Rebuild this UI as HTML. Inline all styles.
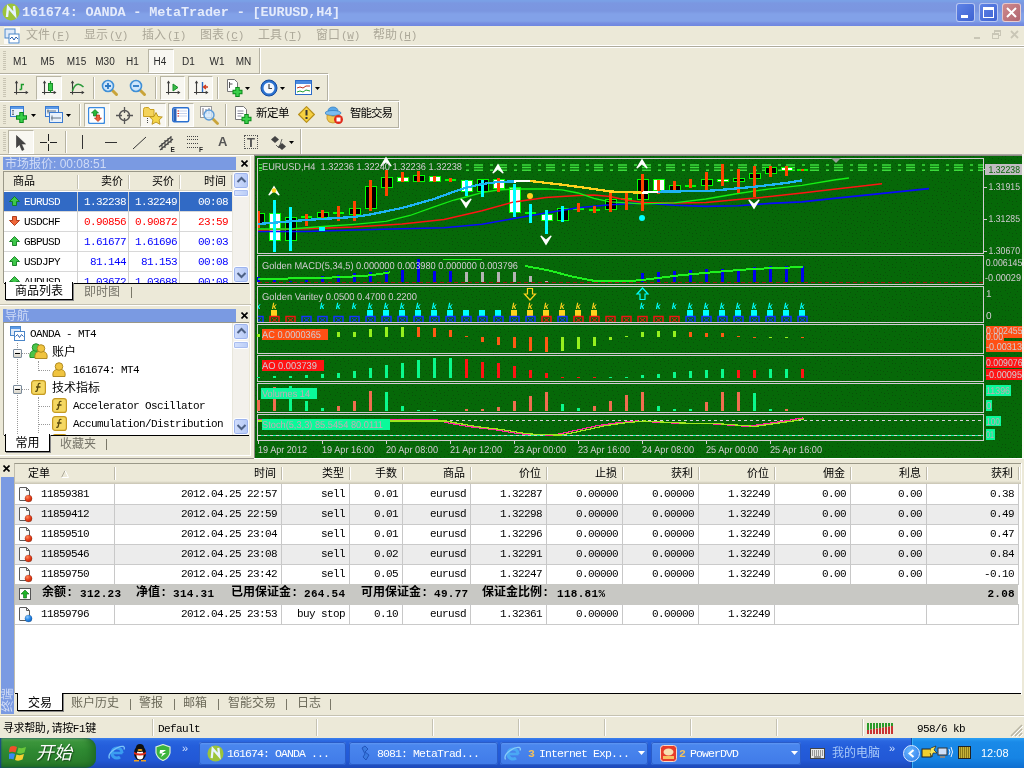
<!DOCTYPE html>
<html lang="zh-CN">
<head>
<meta charset="utf-8">
<title>161674: OANDA - MetaTrader - [EURUSD,H4]</title>
<style>
*{box-sizing:border-box;margin:0;padding:0}
html,body{width:1024px;height:768px;overflow:hidden;background:#ece9d8}
body{position:relative;font-family:"Liberation Mono","Noto Sans CJK SC",monospace;font-size:11px;color:#000}
.abs,.abs *{position:absolute}
.a{position:absolute}
.mono{font-family:"Liberation Mono","Noto Sans CJK SC",monospace;font-size:11px;letter-spacing:-0.6px;white-space:nowrap}
.cjk{font-family:"Liberation Sans","Noto Sans CJK SC",sans-serif;font-size:12px;white-space:nowrap}
.tah{font-family:"Liberation Sans","Noto Sans CJK SC",sans-serif;font-size:11px;white-space:nowrap}
/* title bar */
#title{left:0;top:0;width:1024px;height:26px;background:linear-gradient(#7aa0e6 0,#7aa0e6 1px,#7b97e1 3px,#7b96e0 11px,#82a1e8 14px,#82a1e8 21px,#7890e2 23px,#6e86e0 26px)}
#title .txt{left:22px;top:4px;font-family:"Liberation Mono","Noto Sans CJK SC",monospace;font-weight:bold;font-size:13.5px;letter-spacing:-0.15px;color:#e4ebfb;white-space:nowrap;line-height:18px}
.tb{top:3px;width:19px;height:19px;border:1px solid rgba(255,255,255,.6);border-radius:3px}
/* menu */
#menu{left:0;top:26px;width:1024px;height:19px;background:#ece9d8}
#menu i{position:static;font-style:normal;font-family:"Liberation Mono",monospace;font-size:11px;letter-spacing:-.3px;margin-left:1px}
#menu span{top:2px;color:#aca899;font-size:12px;line-height:15px;font-family:"Liberation Sans","Noto Sans CJK SC",sans-serif;white-space:nowrap}
.hl{height:1px;background:#fff}
.sh{height:1px;background:#aca899}
</style>
</head>
<body>
<div id="root" style="position:absolute;left:0;top:0;width:1024px;height:768px;will-change:transform;overflow:hidden">
<!-- TITLE BAR -->
<div id="title" class="a">
  <svg class="a" style="left:2px;top:3px" width="18" height="18" viewBox="0 0 18 18"><circle cx="9" cy="9" r="8.5" fill="#9cc43a"/><path d="M5 14 L6 4 L13 12 L12 3" fill="none" stroke="#e6f2ff" stroke-width="2.4"/></svg>
  <div class="a txt">161674: OANDA - MetaTrader - [EURUSD,H4]</div>
  <div class="a tb" style="left:956px;background:linear-gradient(135deg,#5f83e6,#3d62d2)"><div class="a" style="left:4px;top:11px;width:7px;height:3px;background:#fff"></div></div>
  <div class="a tb" style="left:979px;background:linear-gradient(135deg,#5f83e6,#3d62d2)"><div class="a" style="left:3px;top:3px;width:11px;height:11px;border:1px solid #fff;border-top-width:3px"></div></div>
  <div class="a tb" style="left:1002px;background:linear-gradient(135deg,#cf8a8e,#b0656f)"><svg class="a" style="left:3px;top:3px" width="11" height="11" viewBox="0 0 11 11"><path d="M1 1L10 10M10 1L1 10" stroke="#fff" stroke-width="2"/></svg></div>
</div>
<!-- MENU BAR -->
<div id="menu" class="a">
  <div class="a" style="left:4px;top:1px;width:16px;height:17px;background:#fbfaf6"></div><svg class="a" style="left:4px;top:2px" width="16" height="16" viewBox="0 0 16 16"><rect x="1" y="1" width="10" height="9" fill="#dfeaf8" stroke="#4a86c8"/><rect x="5" y="6" width="10" height="9" fill="#fff" stroke="#4a86c8"/><path d="M6 11l2-2 2 3 2-3 2 2" stroke="#2a62b0" fill="none"/></svg>
  <span class="a" style="left:26px">文件<i>(<u>F</u>)</i></span>
  <span class="a" style="left:84px">显示<i>(<u>V</u>)</i></span>
  <span class="a" style="left:142px">插入<i>(<u>I</u>)</i></span>
  <span class="a" style="left:200px">图表<i>(<u>C</u>)</i></span>
  <span class="a" style="left:258px">工具<i>(<u>T</u>)</i></span>
  <span class="a" style="left:316px">窗口<i>(<u>W</u>)</i></span>
  <span class="a" style="left:373px">帮助<i>(<u>H</u>)</i></span>
  <div class="a" style="left:974px;top:11px;width:6px;height:2px;background:#c9c6b6"></div>
  <div class="a" style="left:994px;top:4px;width:7px;height:6px;border:1px solid #c9c6b6;border-top-width:2px"></div>
  <div class="a" style="left:992px;top:7px;width:7px;height:6px;border:1px solid #c9c6b6;border-top-width:2px;background:#ece9d8"></div>
  <svg class="a" style="left:1010px;top:4px" width="9" height="9" viewBox="0 0 9 9"><path d="M1 1L8 8M8 1L1 8" stroke="#c9c6b6" stroke-width="1.8"/></svg>
</div>
<div class="a hl" style="left:0;top:45px;width:1024px"></div>
<div class="a sh" style="left:0;top:46px;width:1024px;background:#aeab9c"></div>
<div class="a hl" style="left:0;top:47px;width:1024px"></div>
<!-- toolbars -->
<div class="a" style="left:0;top:73px;width:328px;height:1px;background:#b4b1a2"></div><div class="a" style="left:0;top:74px;width:329px;height:1px;background:#fff"></div><div class="a" style="left:259px;top:48px;width:1px;height:25px;background:#b4b1a2"></div><div class="a" style="left:260px;top:48px;width:1px;height:26px;background:#fff"></div>
<div class="a" style="left:3px;top:51px;width:3px;height:1px;background:#c8c4b3"></div><div class="a" style="left:3px;top:53px;width:3px;height:1px;background:#c8c4b3"></div><div class="a" style="left:3px;top:55px;width:3px;height:1px;background:#c8c4b3"></div><div class="a" style="left:3px;top:57px;width:3px;height:1px;background:#c8c4b3"></div><div class="a" style="left:3px;top:59px;width:3px;height:1px;background:#c8c4b3"></div><div class="a" style="left:3px;top:61px;width:3px;height:1px;background:#c8c4b3"></div><div class="a" style="left:3px;top:63px;width:3px;height:1px;background:#c8c4b3"></div><div class="a" style="left:3px;top:65px;width:3px;height:1px;background:#c8c4b3"></div><div class="a" style="left:3px;top:67px;width:3px;height:1px;background:#c8c4b3"></div><div class="a" style="left:3px;top:69px;width:3px;height:1px;background:#c8c4b3"></div>
<div class="a" style="left:148px;top:49px;width:26px;height:24px;background:#f8f7f1;border:1px solid;border-color:#b8b5a4 #fff #fff #b8b5a4"></div>
<div class="a tah" style="left:6px;top:55px;width:28px;text-align:center;color:#2a2a2a;line-height:14px;font-size:10px">M1</div>
<div class="a tah" style="left:33.5px;top:55px;width:28px;text-align:center;color:#2a2a2a;line-height:14px;font-size:10px">M5</div>
<div class="a tah" style="left:62.5px;top:55px;width:28px;text-align:center;color:#2a2a2a;line-height:14px;font-size:10px">M15</div>
<div class="a tah" style="left:91px;top:55px;width:28px;text-align:center;color:#2a2a2a;line-height:14px;font-size:10px">M30</div>
<div class="a tah" style="left:118.5px;top:55px;width:28px;text-align:center;color:#2a2a2a;line-height:14px;font-size:10px">H1</div>
<div class="a tah" style="left:146px;top:55px;width:28px;text-align:center;color:#2a2a2a;line-height:14px;font-size:10px">H4</div>
<div class="a tah" style="left:174.5px;top:55px;width:28px;text-align:center;color:#2a2a2a;line-height:14px;font-size:10px">D1</div>
<div class="a tah" style="left:203px;top:55px;width:28px;text-align:center;color:#2a2a2a;line-height:14px;font-size:10px">W1</div>
<div class="a tah" style="left:229.5px;top:55px;width:28px;text-align:center;color:#2a2a2a;line-height:14px;font-size:10px">MN</div>
<div class="a" style="left:0;top:100px;width:399px;height:1px;background:#b4b1a2"></div><div class="a" style="left:0;top:101px;width:400px;height:1px;background:#fff"></div><div class="a" style="left:327px;top:75px;width:1px;height:25px;background:#b4b1a2"></div><div class="a" style="left:328px;top:75px;width:1px;height:26px;background:#fff"></div>
<div class="a" style="left:3px;top:78px;width:3px;height:1px;background:#c8c4b3"></div><div class="a" style="left:3px;top:80px;width:3px;height:1px;background:#c8c4b3"></div><div class="a" style="left:3px;top:82px;width:3px;height:1px;background:#c8c4b3"></div><div class="a" style="left:3px;top:84px;width:3px;height:1px;background:#c8c4b3"></div><div class="a" style="left:3px;top:86px;width:3px;height:1px;background:#c8c4b3"></div><div class="a" style="left:3px;top:88px;width:3px;height:1px;background:#c8c4b3"></div><div class="a" style="left:3px;top:90px;width:3px;height:1px;background:#c8c4b3"></div><div class="a" style="left:3px;top:92px;width:3px;height:1px;background:#c8c4b3"></div><div class="a" style="left:3px;top:94px;width:3px;height:1px;background:#c8c4b3"></div><div class="a" style="left:3px;top:96px;width:3px;height:1px;background:#c8c4b3"></div>
<svg class="a" style="left:13px;top:80px" width="17" height="17" viewBox="0 0 17 17"><path d="M3.500 1.500v13M1 12.500h13.500" stroke="#3c3c3c" stroke-width="1.100" fill="none"/><path d="M3.500 0.500l-1.700 2.800h3.400zM15.500 12.500l-2.800-1.700v3.400z" fill="#3c3c3c"/><path d="M8.5 9.5v-5h2.5M8.5 9.5h-2" stroke="#1a9a2a" stroke-width="1.5" fill="none"/></svg>
<div class="a" style="left:36px;top:76px;width:26px;height:24px;background:#f8f7f1;border:1px solid;border-color:#b8b5a4 #fff #fff #b8b5a4"></div>
<svg class="a" style="left:41px;top:80px" width="17" height="17" viewBox="0 0 17 17"><path d="M3.500 1.500v13M1 12.500h13.500" stroke="#3c3c3c" stroke-width="1.100" fill="none"/><path d="M3.500 0.500l-1.700 2.800h3.400zM15.500 12.500l-2.800-1.700v3.400z" fill="#3c3c3c"/><path d="M9.5 1v12" stroke="#1a8a2a" stroke-width="1.2"/><rect x="7.5" y="3.5" width="4" height="7" fill="#35c845" stroke="#1a8a2a"/></svg>
<svg class="a" style="left:69px;top:80px" width="17" height="17" viewBox="0 0 17 17"><path d="M3.500 1.500v13M1 12.500h13.500" stroke="#3c3c3c" stroke-width="1.100" fill="none"/><path d="M3.500 0.500l-1.700 2.800h3.400zM15.500 12.500l-2.800-1.700v3.400z" fill="#3c3c3c"/><path d="M3.5 11c2-7 6-9 11-4" stroke="#2a9a3a" stroke-width="1.5" fill="none"/></svg>
<div class="a" style="left:93px;top:77px;width:1px;height:22px;background:#b5b2a1"></div><div class="a" style="left:94px;top:77px;width:1px;height:22px;background:#fff"></div>
<svg class="a" style="left:101px;top:79px" width="18" height="18" viewBox="0 0 18 18"><path d="M10 10l5.5 5.5" stroke="#c9a43a" stroke-width="3" stroke-linecap="round"/><circle cx="7" cy="7" r="5.5" fill="#cfe6fb" stroke="#3f8fd6" stroke-width="1.6"/><path d="M4 7h6M7 4v6" stroke="#2a78c4" stroke-width="1.8"/></svg>
<svg class="a" style="left:129px;top:79px" width="18" height="18" viewBox="0 0 18 18"><path d="M10 10l5.5 5.5" stroke="#c9a43a" stroke-width="3" stroke-linecap="round"/><circle cx="7" cy="7" r="5.5" fill="#cfe6fb" stroke="#3f8fd6" stroke-width="1.6"/><path d="M4 7h6" stroke="#2a78c4" stroke-width="1.8"/></svg>
<div class="a" style="left:155px;top:77px;width:1px;height:22px;background:#b5b2a1"></div><div class="a" style="left:156px;top:77px;width:1px;height:22px;background:#fff"></div>
<div class="a" style="left:160px;top:76px;width:25px;height:24px;background:#f8f7f1;border:1px solid;border-color:#b8b5a4 #fff #fff #b8b5a4"></div>
<svg class="a" style="left:165px;top:80px" width="17" height="17" viewBox="0 0 17 17"><path d="M3.500 1.500v13M1 12.500h13.500" stroke="#3c3c3c" stroke-width="1.100" fill="none"/><path d="M3.500 0.500l-1.700 2.800h3.400zM15.500 12.500l-2.800-1.700v3.400z" fill="#3c3c3c"/><path d="M8 4l5 3.5-5 3.5z" fill="#38c048" stroke="#1a8a2a"/></svg>
<div class="a" style="left:188px;top:76px;width:25px;height:24px;background:#f8f7f1;border:1px solid;border-color:#b8b5a4 #fff #fff #b8b5a4"></div>
<svg class="a" style="left:193px;top:80px" width="17" height="17" viewBox="0 0 17 17"><path d="M3.500 1.500v13M1 12.500h13.500" stroke="#3c3c3c" stroke-width="1.100" fill="none"/><path d="M3.500 0.500l-1.700 2.800h3.400zM15.500 12.500l-2.800-1.700v3.400z" fill="#3c3c3c"/><path d="M9.500 2v10" stroke="#2a6ac0" stroke-width="1.4"/><path d="M15 7h-4M13 5l-2.500 2 2.500 2" stroke="#d03a1a" stroke-width="1.3" fill="none"/></svg>
<div class="a" style="left:217px;top:77px;width:1px;height:22px;background:#b5b2a1"></div><div class="a" style="left:218px;top:77px;width:1px;height:22px;background:#fff"></div>
<svg class="a" style="left:226px;top:79px" width="18" height="19" viewBox="0 0 18 19"><path d="M1.500 0.500h7l3 3v9h-10z" fill="#fff" stroke="#777"/><path d="M3.500 3v6M3.500 5h3" stroke="#555" fill="none"/><path d="M11.500 8v10M6.500 13h10" stroke="#0a8a1a" stroke-width="4.500"/><path d="M11.500 9v8M7.500 13h8" stroke="#3ad04a" stroke-width="2.500"/></svg>
<svg class="a" style="left:245px;top:87px" width="5" height="3" viewBox="0 0 5 3"><path d="M0 0h5L2.5 3z" fill="#000"/></svg>
<svg class="a" style="left:260px;top:79px" width="18" height="18" viewBox="0 0 18 18"><circle cx="9" cy="9" r="8" fill="#2a72d0" stroke="#174a9c"/><circle cx="9" cy="9" r="5.500" fill="#f4f8ff"/><path d="M9 5v4.500h3" stroke="#444" stroke-width="1.200" fill="none"/></svg>
<svg class="a" style="left:280px;top:87px" width="5" height="3" viewBox="0 0 5 3"><path d="M0 0h5L2.5 3z" fill="#000"/></svg>
<svg class="a" style="left:295px;top:80px" width="18" height="16" viewBox="0 0 18 16"><rect x="0.500" y="0.500" width="16" height="14" fill="#fff" stroke="#2a6ac8"/><rect x="1" y="1" width="15" height="3" fill="#4a8ae0"/><path d="M2 8l3-1 3 1 3-2 4 0" stroke="#c03020" fill="none"/><path d="M2 12l3-1 3 1 3-2 4 1" stroke="#20a030" fill="none"/></svg>
<svg class="a" style="left:315px;top:87px" width="5" height="3" viewBox="0 0 5 3"><path d="M0 0h5L2.5 3z" fill="#000"/></svg>
<div class="a" style="left:0;top:127px;width:399px;height:1px;background:#b4b1a2"></div><div class="a" style="left:0;top:128px;width:400px;height:1px;background:#fff"></div><div class="a" style="left:398px;top:102px;width:1px;height:25px;background:#b4b1a2"></div><div class="a" style="left:399px;top:102px;width:1px;height:26px;background:#fff"></div>
<div class="a" style="left:3px;top:105px;width:3px;height:1px;background:#c8c4b3"></div><div class="a" style="left:3px;top:107px;width:3px;height:1px;background:#c8c4b3"></div><div class="a" style="left:3px;top:109px;width:3px;height:1px;background:#c8c4b3"></div><div class="a" style="left:3px;top:111px;width:3px;height:1px;background:#c8c4b3"></div><div class="a" style="left:3px;top:113px;width:3px;height:1px;background:#c8c4b3"></div><div class="a" style="left:3px;top:115px;width:3px;height:1px;background:#c8c4b3"></div><div class="a" style="left:3px;top:117px;width:3px;height:1px;background:#c8c4b3"></div><div class="a" style="left:3px;top:119px;width:3px;height:1px;background:#c8c4b3"></div><div class="a" style="left:3px;top:121px;width:3px;height:1px;background:#c8c4b3"></div><div class="a" style="left:3px;top:123px;width:3px;height:1px;background:#c8c4b3"></div>
<svg class="a" style="left:10px;top:106px" width="19" height="18" viewBox="0 0 19 18"><rect x="0.500" y="0.500" width="13" height="10" fill="#e8f1fb" stroke="#3a7ad0"/><rect x="1" y="1" width="12" height="2" fill="#5a9ae8"/><path d="M3 4v5M2 5l1-1 1 1M2 8l1 1 1-1" stroke="#567" fill="none" stroke-width=".8"/><path d="M11.500 6v11M6 11.500h11" stroke="#0a8a1a" stroke-width="4.500"/><path d="M11.500 7v9M7 11.500h9" stroke="#3ad04a" stroke-width="2.500"/></svg>
<svg class="a" style="left:31px;top:114px" width="5" height="3" viewBox="0 0 5 3"><path d="M0 0h5L2.5 3z" fill="#000"/></svg>
<svg class="a" style="left:45px;top:106px" width="19" height="18" viewBox="0 0 19 18"><rect x="0.500" y="0.500" width="13" height="10" fill="#e8f1fb" stroke="#3a7ad0"/><rect x="1" y="1" width="12" height="2" fill="#5a9ae8"/><rect x="4.500" y="6.500" width="13" height="10" fill="#e8f1fb" stroke="#3a7ad0"/><path d="M2 5h9M6 12h10M3 3.500v4M7 9.500v5" stroke="#567" stroke-width=".9"/></svg>
<svg class="a" style="left:66px;top:114px" width="5" height="3" viewBox="0 0 5 3"><path d="M0 0h5L2.5 3z" fill="#000"/></svg>
<div class="a" style="left:79px;top:104px;width:1px;height:22px;background:#b5b2a1"></div><div class="a" style="left:80px;top:104px;width:1px;height:22px;background:#fff"></div>
<div class="a" style="left:84px;top:103px;width:26px;height:24px;background:#f8f7f1;border:1px solid;border-color:#b8b5a4 #fff #fff #b8b5a4"></div>
<svg class="a" style="left:88px;top:107px" width="17" height="17" viewBox="0 0 17 17"><rect x="0.500" y="0.500" width="16" height="16" rx="1.500" fill="#fff" stroke="#3a8ae0" stroke-width="1.400"/><path d="M5.500 9V6h-2l3.500-3.500L10.500 6h-2v3z" fill="#2ab83a" stroke="#0a7a1a" stroke-width=".7"/><path d="M8.500 8v3h-2l3.500 3.500L13.500 11h-2V8z" fill="#f0603a" stroke="#b02a10" stroke-width=".7"/></svg>
<svg class="a" style="left:116px;top:107px" width="17" height="17" viewBox="0 0 17 17"><circle cx="8.500" cy="8.500" r="5" fill="none" stroke="#555" stroke-width="1.500"/><path d="M8.500 0v6M8.500 11v6M0 8.500h6M11 8.500h6" stroke="#555" stroke-width="1.300"/></svg>
<div class="a" style="left:140px;top:103px;width:26px;height:24px;background:#f8f7f1;border:1px solid;border-color:#b8b5a4 #fff #fff #b8b5a4"></div>
<svg class="a" style="left:143px;top:106px" width="20" height="19" viewBox="0 0 20 19"><path d="M0.500 3.500q0-2 2-2h3l1.500 2h4v7h-10.500z" fill="#f4d35a" stroke="#c9a020"/><path d="M13 6.500l2 4 4.300 .5-3.200 3 .9 4.300-4-2.200-4 2.200 .9-4.300-3.200-3 4.300-.5z" fill="#f6d648" stroke="#b8901a" stroke-width=".9"/><path d="M4.500 12v5" stroke="#444" stroke-dasharray="1 1"/></svg>
<div class="a" style="left:168px;top:103px;width:26px;height:24px;background:#f8f7f1;border:1px solid;border-color:#b8b5a4 #fff #fff #b8b5a4"></div>
<svg class="a" style="left:172px;top:107px" width="18" height="16" viewBox="0 0 18 16"><rect x="0.700" y="0.700" width="16" height="14" rx="1.500" fill="#fff" stroke="#2a70d0" stroke-width="1.400"/><rect x="1.500" y="1.500" width="3" height="12.500" fill="#2a60b8"/><path d="M6 4h9M6 6.500h9M6 9h9" stroke="#b8c8e8" stroke-width=".8"/><path d="M5.500 4h1.500M5.500 6.500h1.500M5.500 9h1.500" stroke="#e02a1a" stroke-width="1.200"/></svg>
<svg class="a" style="left:200px;top:106px" width="19" height="19" viewBox="0 0 19 19"><rect x="0.500" y="0.500" width="11" height="11" fill="#fff" stroke="#999"/><path d="M3 2v7M6 3v5M9 2v6" stroke="#778"/><path d="M12 12l5.500 5.500" stroke="#c9a43a" stroke-width="2.800" stroke-linecap="round"/><circle cx="9" cy="9" r="5" fill="#cfe6fb" fill-opacity=".8" stroke="#5a9ad8" stroke-width="1.400"/></svg>
<div class="a" style="left:225px;top:104px;width:1px;height:22px;background:#b5b2a1"></div><div class="a" style="left:226px;top:104px;width:1px;height:22px;background:#fff"></div>
<svg class="a" style="left:235px;top:106px" width="18" height="19" viewBox="0 0 18 19"><path d="M0.500 0.500h8l3 3v10h-11z" fill="#fff" stroke="#777"/><path d="M2.500 5h6M2.500 7.500h6M2.500 10h4" stroke="#889"/><path d="M11.500 8v10M6.500 13h10" stroke="#0a8a1a" stroke-width="4.500"/><path d="M11.500 9v8M7.500 13h8" stroke="#3ad04a" stroke-width="2.500"/></svg>
<div class="a cjk" style="left:256px;top:106px;line-height:15px;font-size:11.5px;letter-spacing:-.5px">新定单</div>
<svg class="a" style="left:298px;top:106px" width="17" height="17" viewBox="0 0 17 17"><path d="M8.500 0.700l7.800 7.800-7.800 7.800-7.800-7.800z" fill="#f6d040" stroke="#b8901a" stroke-width="1.200"/><path d="M8.500 4v5.500M8.500 11v2" stroke="#333" stroke-width="2"/></svg>
<svg class="a" style="left:325px;top:106px" width="19" height="19" viewBox="0 0 19 19"><ellipse cx="8" cy="5" rx="5" ry="4" fill="#5aa8e8" stroke="#2a78c0" stroke-width=".7"/><ellipse cx="8" cy="7" rx="8" ry="2.500" fill="#7abcf0" stroke="#2a78c0" stroke-width=".7"/><path d="M2 9q6 3 12 0v4q-1 4-6 4-5 0-6-4z" fill="#f0c850" stroke="#b88a20" stroke-width=".7"/><circle cx="13.500" cy="13.500" r="4.500" fill="#e02a1a"/><rect x="11.500" y="11.500" width="4" height="4" fill="#fff"/></svg>
<div class="a cjk" style="left:350px;top:106px;line-height:15px;font-size:11.5px;letter-spacing:-1px">智能交易</div>
<div class="a" style="left:0;top:154px;width:301px;height:1px;background:#b4b1a2"></div><div class="a" style="left:0;top:155px;width:302px;height:1px;background:#fff"></div><div class="a" style="left:300px;top:129px;width:1px;height:25px;background:#b4b1a2"></div><div class="a" style="left:301px;top:129px;width:1px;height:26px;background:#fff"></div>
<div class="a" style="left:3px;top:132px;width:3px;height:1px;background:#c8c4b3"></div><div class="a" style="left:3px;top:134px;width:3px;height:1px;background:#c8c4b3"></div><div class="a" style="left:3px;top:136px;width:3px;height:1px;background:#c8c4b3"></div><div class="a" style="left:3px;top:138px;width:3px;height:1px;background:#c8c4b3"></div><div class="a" style="left:3px;top:140px;width:3px;height:1px;background:#c8c4b3"></div><div class="a" style="left:3px;top:142px;width:3px;height:1px;background:#c8c4b3"></div><div class="a" style="left:3px;top:144px;width:3px;height:1px;background:#c8c4b3"></div><div class="a" style="left:3px;top:146px;width:3px;height:1px;background:#c8c4b3"></div><div class="a" style="left:3px;top:148px;width:3px;height:1px;background:#c8c4b3"></div><div class="a" style="left:3px;top:150px;width:3px;height:1px;background:#c8c4b3"></div>
<div class="a" style="left:8px;top:130px;width:26px;height:24px;background:#f8f7f1;border:1px solid;border-color:#b8b5a4 #fff #fff #b8b5a4"></div>
<svg class="a" style="left:16px;top:135px" width="11" height="16" viewBox="0 0 11 16"><path d="M0.500 0.500v12l3-3 2.500 6 2-1-2.500-5.500h4z" fill="#444" stroke="#333" stroke-width=".6"/></svg>
<svg class="a" style="left:40px;top:134px" width="17" height="17" viewBox="0 0 17 17"><path d="M8.500 0v7M8.500 10v7M0 8.500h7M10 8.500h7" stroke="#222" stroke-width="1"/></svg>
<div class="a" style="left:65px;top:131px;width:1px;height:22px;background:#b5b2a1"></div><div class="a" style="left:66px;top:131px;width:1px;height:22px;background:#fff"></div>
<div class="a" style="left:82px;top:135px;width:1px;height:14px;background:#333"></div>
<div class="a" style="left:105px;top:142px;width:12px;height:1px;background:#333"></div>
<svg class="a" style="left:132px;top:136px" width="15" height="14" viewBox="0 0 15 14"><path d="M1 13L14 1" stroke="#333" stroke-width="1"/></svg>
<svg class="a" style="left:158px;top:134px" width="18" height="18" viewBox="0 0 18 18"><path d="M1 13L13 3M2 16L15 5M4 9v7M7 6v8M10 4v7M13 2v7" stroke="#444" stroke-width="1.100"/><text x="12.500" y="18" font-size="6.500" font-weight="bold" font-family="Liberation Sans,sans-serif" fill="#222">E</text></svg>
<svg class="a" style="left:187px;top:135px" width="18" height="18" viewBox="0 0 18 18"><path d="M0 1.500h12M0 4.500h12M0 8.500h12M0 12.500h12" stroke="#444" stroke-dasharray="1 1"/><text x="12" y="17" font-size="6.500" font-weight="bold" font-family="Liberation Sans,sans-serif" fill="#222">F</text></svg>
<div class="a" style="left:218px;top:134px;font-family:'Liberation Sans',sans-serif;font-weight:bold;font-size:13px;color:#555;line-height:16px">A</div>
<div class="a" style="left:244px;top:135px;width:14px;height:14px;border:1px dotted #555;font-family:'Liberation Sans',sans-serif;font-weight:bold;font-size:13px;color:#555;line-height:13px;text-align:center">T</div>
<svg class="a" style="left:271px;top:136px" width="16" height="14" viewBox="0 0 16 14"><path d="M4 0l4 3.500-4 3.500-4-3.500z" fill="#444"/><path d="M11 7l4 3.500-4 3.500-4-3.500z" fill="#444"/><path d="M5 9l3 3 3-9" stroke="#444" fill="none" stroke-width=".8"/></svg>
<svg class="a" style="left:289px;top:141px" width="5" height="3" viewBox="0 0 5 3"><path d="M0 0h5L2.5 3z" fill="#000"/></svg>
<!-- left -->
<div class="a" style="left:0;top:155px;width:251px;height:1px;background:#fff"></div>
<div class="a" style="left:250px;top:156px;width:1px;height:300px;background:#fff"></div>
<div class="a" style="left:0;top:304px;width:251px;height:1px;background:#c5c2b2"></div>
<div class="a" style="left:0;top:305px;width:251px;height:1px;background:#fff"></div>
<div class="a" style="left:3px;top:157px;width:233px;height:13px;background:#7a9ae2"></div><div class="a cjk" style="left:5px;top:156px;line-height:16px;font-size:12px;color:#cfdbf6">市场报价: 00:08:51</div><svg class="a" style="left:241px;top:160px" width="7" height="7" viewBox="0 0 7 7"><path d="M0.500 0.500l6 6M6.500 0.500l-6 6" stroke="#000" stroke-width="1.600"/></svg>
<div class="a" style="left:3px;top:171px;width:246px;height:112px;background:#fff;border:1px solid #9a9888;border-bottom:none"></div>
<div class="a" style="left:4px;top:172px;width:228px;height:19px;background:#ece9d8;border-bottom:1px solid #d6d2c2"></div>
<div class="a" style="left:77px;top:175px;width:1px;height:14px;background:#c5c2b2"></div><div class="a" style="left:78px;top:175px;width:1px;height:14px;background:#fff"></div>
<div class="a" style="left:128px;top:175px;width:1px;height:14px;background:#c5c2b2"></div><div class="a" style="left:129px;top:175px;width:1px;height:14px;background:#fff"></div>
<div class="a" style="left:179px;top:175px;width:1px;height:14px;background:#c5c2b2"></div><div class="a" style="left:180px;top:175px;width:1px;height:14px;background:#fff"></div>
<div class="a" style="left:231px;top:175px;width:1px;height:14px;background:#c5c2b2"></div><div class="a" style="left:232px;top:175px;width:1px;height:14px;background:#fff"></div>
<div class="a cjk" style="left:13px;top:173px;line-height:16px;font-size:11px">商品</div>
<div class="a cjk" style="left:83px;width:40px;text-align:right;top:173px;line-height:16px;font-size:11px">卖价</div>
<div class="a cjk" style="left:134px;width:40px;text-align:right;top:173px;line-height:16px;font-size:11px">买价</div>
<div class="a cjk" style="left:186px;width:40px;text-align:right;top:173px;line-height:16px;font-size:11px">时间</div>
<div class="a" style="left:4px;top:192px;width:228px;height:91px;overflow:hidden">
<div class="a" style="left:0;top:0px;width:228px;height:20px;background:#316ac5;border-bottom:1px solid #d8d8d8"></div>
<svg class="a" style="left:5px;top:4px" width="11" height="10" viewBox="0 0 11 10"><path d="M5.500 0.500L10.500 5.500H7.500V9.500H3.500V5.500H0.500z" fill="#3ec84a" stroke="#0e7a1e" stroke-width=".9"/></svg>
<div class="a mono" style="left:20px;top:3px;line-height:14px;color:#fff">EURUSD</div>
<div class="a mono" style="left:62px;width:60px;text-align:right;top:3px;line-height:14px;color:#fff">1.32238</div>
<div class="a mono" style="left:113px;width:60px;text-align:right;top:3px;line-height:14px;color:#fff">1.32249</div>
<div class="a mono" style="left:164px;width:60px;text-align:right;top:3px;line-height:14px;color:#fff">00:08</div>
<div class="a" style="left:0;top:20px;width:228px;height:20px;background:#fff;border-bottom:1px solid #d8d8d8"></div>
<svg class="a" style="left:5px;top:24px" width="11" height="10" viewBox="0 0 11 10"><path d="M5.500 9.500L10.500 4.500H7.500V0.500H3.500V4.500H0.500z" fill="#f0683a" stroke="#a8300e" stroke-width=".9"/></svg>
<div class="a mono" style="left:20px;top:23px;line-height:14px;color:#000">USDCHF</div>
<div class="a mono" style="left:62px;width:60px;text-align:right;top:23px;line-height:14px;color:#f00">0.90856</div>
<div class="a mono" style="left:113px;width:60px;text-align:right;top:23px;line-height:14px;color:#f00">0.90872</div>
<div class="a mono" style="left:164px;width:60px;text-align:right;top:23px;line-height:14px;color:#f00">23:59</div>
<div class="a" style="left:0;top:40px;width:228px;height:20px;background:#fff;border-bottom:1px solid #d8d8d8"></div>
<svg class="a" style="left:5px;top:44px" width="11" height="10" viewBox="0 0 11 10"><path d="M5.500 0.500L10.500 5.500H7.500V9.500H3.500V5.500H0.500z" fill="#3ec84a" stroke="#0e7a1e" stroke-width=".9"/></svg>
<div class="a mono" style="left:20px;top:43px;line-height:14px;color:#000">GBPUSD</div>
<div class="a mono" style="left:62px;width:60px;text-align:right;top:43px;line-height:14px;color:#00f">1.61677</div>
<div class="a mono" style="left:113px;width:60px;text-align:right;top:43px;line-height:14px;color:#00f">1.61696</div>
<div class="a mono" style="left:164px;width:60px;text-align:right;top:43px;line-height:14px;color:#00f">00:03</div>
<div class="a" style="left:0;top:60px;width:228px;height:20px;background:#fff;border-bottom:1px solid #d8d8d8"></div>
<svg class="a" style="left:5px;top:64px" width="11" height="10" viewBox="0 0 11 10"><path d="M5.500 0.500L10.500 5.500H7.500V9.500H3.500V5.500H0.500z" fill="#3ec84a" stroke="#0e7a1e" stroke-width=".9"/></svg>
<div class="a mono" style="left:20px;top:63px;line-height:14px;color:#000">USDJPY</div>
<div class="a mono" style="left:62px;width:60px;text-align:right;top:63px;line-height:14px;color:#00f">81.144</div>
<div class="a mono" style="left:113px;width:60px;text-align:right;top:63px;line-height:14px;color:#00f">81.153</div>
<div class="a mono" style="left:164px;width:60px;text-align:right;top:63px;line-height:14px;color:#00f">00:08</div>
<div class="a" style="left:0;top:80px;width:228px;height:20px;background:#fff;border-bottom:1px solid #d8d8d8"></div>
<svg class="a" style="left:5px;top:84px" width="11" height="10" viewBox="0 0 11 10"><path d="M5.500 0.500L10.500 5.500H7.500V9.500H3.500V5.500H0.500z" fill="#3ec84a" stroke="#0e7a1e" stroke-width=".9"/></svg>
<div class="a mono" style="left:20px;top:83px;line-height:14px;color:#000">AUDUSD</div>
<div class="a mono" style="left:62px;width:60px;text-align:right;top:83px;line-height:14px;color:#00f">1.03672</div>
<div class="a mono" style="left:113px;width:60px;text-align:right;top:83px;line-height:14px;color:#00f">1.03688</div>
<div class="a mono" style="left:164px;width:60px;text-align:right;top:83px;line-height:14px;color:#00f">00:08</div>
<div class="a" style="left:73px;top:0;width:1px;height:91px;background:#d0d0d0"></div>
<div class="a" style="left:124px;top:0;width:1px;height:91px;background:#d0d0d0"></div>
<div class="a" style="left:175px;top:0;width:1px;height:91px;background:#d0d0d0"></div>
</div>
<div class="a" style="left:232px;top:172px;width:17px;height:111px;background:#f3f1ec;border-left:1px solid #e8e6dc"></div><div class="a" style="left:233px;top:172px;width:16px;height:17px;background:linear-gradient(90deg,#d2defc,#b4c8f6);border:1px solid #fff;border-radius:3px;box-shadow:0 0 0 1px #9db4ee inset"></div><svg class="a" style="left:234px;top:173px" width="15" height="16" viewBox="0 0 15 16"><path d="M3.500 9l4-4 4 4" stroke="#4d6185" stroke-width="2" fill="none"/></svg><div class="a" style="left:233px;top:266px;width:16px;height:17px;background:linear-gradient(90deg,#d2defc,#b4c8f6);border:1px solid #fff;border-radius:3px;box-shadow:0 0 0 1px #9db4ee inset"></div><svg class="a" style="left:234px;top:267px" width="15" height="16" viewBox="0 0 15 16"><path d="M3.500 6l4 4 4-4" stroke="#4d6185" stroke-width="2" fill="none"/></svg><div class="a" style="left:233px;top:189px;width:16px;height:8px;background:linear-gradient(90deg,#d6e2fc,#b9ccf7);border:1px solid #fff;border-radius:2px;box-shadow:0 0 0 1px #a9bdf0 inset"></div>
<div class="a" style="left:4px;top:283px;width:245px;height:1px;background:#000"></div><div class="a" style="left:5px;top:282px;width:68px;height:18px;background:#fff;border:1px solid #000;border-top:none;box-shadow:1px 1px 0 #888"></div><div class="a cjk" style="left:5px;top:284px;width:68px;text-align:center;line-height:15px;font-size:12px">商品列表</div><div class="a cjk" style="left:84px;top:285px;line-height:15px;font-size:12px;color:#77756a">即时图</div><div class="a" style="left:131px;top:287px;width:1px;height:11px;background:#7a7868"></div>
<div class="a" style="left:3px;top:309px;width:233px;height:13px;background:#7a9ae2"></div><div class="a cjk" style="left:5px;top:308px;line-height:16px;font-size:12px;color:#cfdbf6">导航</div><svg class="a" style="left:241px;top:312px" width="7" height="7" viewBox="0 0 7 7"><path d="M0.500 0.500l6 6M6.500 0.500l-6 6" stroke="#000" stroke-width="1.600"/></svg>
<div class="a" style="left:3px;top:322px;width:246px;height:113px;background:#fff;border:1px solid #9a9888;border-bottom:none"></div>
<div class="a" style="left:232px;top:323px;width:17px;height:112px;background:#f3f1ec;border-left:1px solid #e8e6dc"></div><div class="a" style="left:233px;top:323px;width:16px;height:17px;background:linear-gradient(90deg,#d2defc,#b4c8f6);border:1px solid #fff;border-radius:3px;box-shadow:0 0 0 1px #9db4ee inset"></div><svg class="a" style="left:234px;top:324px" width="15" height="16" viewBox="0 0 15 16"><path d="M3.500 9l4-4 4 4" stroke="#4d6185" stroke-width="2" fill="none"/></svg><div class="a" style="left:233px;top:418px;width:16px;height:17px;background:linear-gradient(90deg,#d2defc,#b4c8f6);border:1px solid #fff;border-radius:3px;box-shadow:0 0 0 1px #9db4ee inset"></div><svg class="a" style="left:234px;top:419px" width="15" height="16" viewBox="0 0 15 16"><path d="M3.500 6l4 4 4-4" stroke="#4d6185" stroke-width="2" fill="none"/></svg><div class="a" style="left:233px;top:341px;width:16px;height:8px;background:linear-gradient(90deg,#d6e2fc,#b9ccf7);border:1px solid #fff;border-radius:2px;box-shadow:0 0 0 1px #a9bdf0 inset"></div>
<div class="a" style="left:4px;top:323px;width:228px;height:112px;overflow:hidden">
<div class="a" style="left:13px;top:20px;width:0;height:95px;border-left:1px dotted #999"></div>
<div class="a" style="left:18px;top:30px;width:7px;height:0;border-top:1px dotted #999"></div>
<div class="a" style="left:18px;top:66px;width:7px;height:0;border-top:1px dotted #999"></div>
<div class="a" style="left:34px;top:38px;width:0;height:10px;border-left:1px dotted #999"></div>
<div class="a" style="left:34px;top:47px;width:12px;height:0;border-top:1px dotted #999"></div>
<div class="a" style="left:34px;top:74px;width:0;height:40px;border-left:1px dotted #999"></div>
<div class="a" style="left:34px;top:83px;width:12px;height:0;border-top:1px dotted #999"></div>
<div class="a" style="left:34px;top:101px;width:12px;height:0;border-top:1px dotted #999"></div>
<svg class="a" style="left:6px;top:3px" width="15" height="15" viewBox="0 0 15 15"><rect x="0.500" y="0.500" width="10" height="9" fill="#dfeaf8" stroke="#4a86c8"/><rect x="1" y="1" width="9" height="2" fill="#5a9ae8"/><rect x="4.500" y="5.500" width="10" height="9" fill="#fff" stroke="#4a86c8"/><path d="M5.500 10.500l2-2 2 3 2-3 2 2" stroke="#2a62b0" fill="none"/></svg>
<div class="a mono" style="left:26px;top:4px;line-height:14px">OANDA - MT4</div>
<div class="a" style="left:9px;top:26px;width:9px;height:9px;background:linear-gradient(#fff,#d8d4c8);border:1px solid #7a8a9a;border-radius:1px"></div><div class="a" style="left:11px;top:30px;width:5px;height:1px;background:#000"></div>
<svg class="a" style="left:25px;top:20px" width="14" height="15" viewBox="0 0 14 15"><path d="M1 14.500q-1-6 3.500-7h5q4.500 1 3.500 7z" fill="#4cc44a" stroke="#1a8a22" stroke-width=".9"/><circle cx="7" cy="4.500" r="3.800" fill="#4cc44a" stroke="#1a8a22" stroke-width=".9"/></svg>
<svg class="a" style="left:30px;top:21px" width="14" height="15" viewBox="0 0 14 15"><path d="M1 14.500q-1-6 3.500-7h5q4.500 1 3.500 7z" fill="#f0c440" stroke="#a8821a" stroke-width=".9"/><circle cx="7" cy="4.500" r="3.800" fill="#f0c440" stroke="#a8821a" stroke-width=".9"/></svg>
<div class="a cjk" style="left:48px;top:22px;line-height:15px;font-size:12px">账户</div>
<svg class="a" style="left:48px;top:39px" width="14" height="15" viewBox="0 0 14 15"><path d="M1 14.500q-1-6 3.500-7h5q4.500 1 3.500 7z" fill="#f0c440" stroke="#a8821a" stroke-width=".9"/><circle cx="7" cy="4.500" r="3.800" fill="#f0c440" stroke="#a8821a" stroke-width=".9"/></svg>
<div class="a mono" style="left:69px;top:40px;line-height:14px">161674: MT4</div>
<div class="a" style="left:9px;top:62px;width:9px;height:9px;background:linear-gradient(#fff,#d8d4c8);border:1px solid #7a8a9a;border-radius:1px"></div><div class="a" style="left:11px;top:66px;width:5px;height:1px;background:#000"></div>
<svg class="a" style="left:27px;top:57px" width="15" height="15" viewBox="0 0 15 15"><rect x="0.600" y="0.600" width="13.800" height="13.800" rx="2.500" fill="#f5d862" stroke="#c59a22" stroke-width="1.200"/><path d="M9.500 3.500q-2-.7-2.300 1.500l-.9 5q-.4 1.800-2 1.200M5 7h4.500" stroke="#5a4a10" stroke-width="1.300" fill="none"/></svg>
<div class="a cjk" style="left:48px;top:58px;line-height:15px;font-size:12px">技术指标</div>
<svg class="a" style="left:48px;top:75px" width="15" height="15" viewBox="0 0 15 15"><rect x="0.600" y="0.600" width="13.800" height="13.800" rx="2.500" fill="#f5d862" stroke="#c59a22" stroke-width="1.200"/><path d="M9.500 3.500q-2-.7-2.300 1.500l-.9 5q-.4 1.800-2 1.200M5 7h4.500" stroke="#5a4a10" stroke-width="1.300" fill="none"/></svg>
<div class="a mono" style="left:69px;top:76px;line-height:14px">Accelerator Oscillator</div>
<svg class="a" style="left:48px;top:93px" width="15" height="15" viewBox="0 0 15 15"><rect x="0.600" y="0.600" width="13.800" height="13.800" rx="2.500" fill="#f5d862" stroke="#c59a22" stroke-width="1.200"/><path d="M9.500 3.500q-2-.7-2.300 1.500l-.9 5q-.4 1.800-2 1.200M5 7h4.500" stroke="#5a4a10" stroke-width="1.300" fill="none"/></svg>
<div class="a mono" style="left:69px;top:94px;line-height:14px">Accumulation/Distribution</div>
<svg class="a" style="left:48px;top:111px" width="15" height="15" viewBox="0 0 15 15"><rect x="0.600" y="0.600" width="13.800" height="13.800" rx="2.500" fill="#f5d862" stroke="#c59a22" stroke-width="1.200"/><path d="M9.500 3.500q-2-.7-2.300 1.500l-.9 5q-.4 1.800-2 1.200M5 7h4.500" stroke="#5a4a10" stroke-width="1.300" fill="none"/></svg>
</div>
<div class="a" style="left:4px;top:435px;width:245px;height:1px;background:#000"></div><div class="a" style="left:5px;top:434px;width:45px;height:18px;background:#fff;border:1px solid #000;border-top:none;box-shadow:1px 1px 0 #888"></div><div class="a cjk" style="left:5px;top:436px;width:45px;text-align:center;line-height:15px;font-size:12px">常用</div><div class="a cjk" style="left:60px;top:437px;line-height:15px;font-size:12px;color:#77756a">收藏夹</div><div class="a" style="left:106px;top:439px;width:1px;height:11px;background:#7a7868"></div>
<!-- chart -->
<svg class="a" style="left:254px;top:154px;will-change:transform" width="770" height="305" viewBox="254 154 770 305" shape-rendering="crispEdges" text-rendering="geometricPrecision">
<defs><pattern id="dots" x="0" y="0" width="32" height="32" patternUnits="userSpaceOnUse"><path d="M20 9h1v1h-1zM25 3h1v1h-1zM4 6h1v1h-1zM13 2h1v1h-1zM5 27h1v1h-1zM15 5h1v1h-1zM7 14h1v1h-1zM3 14h1v1h-1zM18 26h1v1h-1zM9 7h1v1h-1zM23 6h1v1h-1zM4 3h1v1h-1zM13 31h1v1h-1zM27 20h1v1h-1zM29 29h1v1h-1zM23 19h1v1h-1zM15 11h1v1h-1zM19 31h1v1h-1zM21 28h1v1h-1zM18 4h1v1h-1zM10 21h1v1h-1zM9 31h1v1h-1zM4 20h1v1h-1zM21 22h1v1h-1zM22 1h1v1h-1zM31 3h1v1h-1zM13 18h1v1h-1zM25 25h1v1h-1zM10 28h1v1h-1zM5 11h1v1h-1zM31 11h1v1h-1zM16 18h1v1h-1zM6 30h1v1h-1zM13 28h1v1h-1zM24 9h1v1h-1zM16 22h1v1h-1zM21 16h1v1h-1zM1 19h1v1h-1zM12 15h1v1h-1zM25 14h1v1h-1zM30 16h1v1h-1zM0 30h1v1h-1zM7 24h1v1h-1zM25 29h1v1h-1zM10 10h1v1h-1zM0 6h1v1h-1zM8 3h1v1h-1zM28 11h1v1h-1zM28 1h1v1h-1zM20 12h1v1h-1zM28 8h1v1h-1zM1 24h1v1h-1zM4 17h1v1h-1zM17 8h1v1h-1zM19 19h1v1h-1zM13 22h1v1h-1zM9 18h1v1h-1zM16 0h1v1h-1z" fill="#085208"/></pattern>
<clipPath id="cm"><rect x="258" y="159" width="725" height="94"/></clipPath></defs>
<rect x="254" y="154" width="770" height="305" fill="#ece9d8"/>
<rect x="254" y="154" width="768" height="304" fill="#8e8a86"/>
<rect x="254" y="154" width="768" height="1" fill="#aaa6a2"/>
<rect x="255" y="156" width="767" height="302" fill="#066808"/>
<rect x="255" y="156" width="767" height="302" fill="url(#dots)"/>
<rect x="254" y="458" width="770" height="1" fill="#fff"/><rect x="1022" y="154" width="2" height="305" fill="#fbfaf6"/>
<rect x="257.5" y="158.5" width="726" height="95" fill="none" stroke="#d2ccd2"/>
<rect x="257.5" y="255.5" width="726" height="29" fill="none" stroke="#d2ccd2"/>
<rect x="257.5" y="286.5" width="726" height="36" fill="none" stroke="#d2ccd2"/>
<rect x="257.5" y="324.5" width="726" height="29" fill="none" stroke="#d2ccd2"/>
<rect x="257.5" y="355.5" width="726" height="26" fill="none" stroke="#d2ccd2"/>
<rect x="257.5" y="383.5" width="726" height="29" fill="none" stroke="#d2ccd2"/>
<rect x="257.5" y="414.5" width="726" height="26" fill="none" stroke="#d2ccd2"/>
<rect x="984" y="169" width="3" height="1" fill="#d2ccd2"/>
<rect x="984" y="187" width="3" height="1" fill="#d2ccd2"/>
<rect x="984" y="219" width="3" height="1" fill="#d2ccd2"/>
<rect x="984" y="251" width="3" height="1" fill="#d2ccd2"/>
<g clip-path="url(#cm)">
<path d="M466 165H983" stroke="#3cdc3c" stroke-width="1.500" stroke-dasharray="3 5 9 7" shape-rendering="auto"/>
<path d="M466 167.6H983" stroke="#3cdc3c" stroke-width="1.500" stroke-dasharray="0 8 9 7" shape-rendering="auto"/>
<path d="M466 170.2H983" stroke="#3cdc3c" stroke-width="1.500" stroke-dasharray="3 5 9 7" shape-rendering="auto"/>
<rect x="253" y="213" width="11" height="10" fill="#000" stroke="#00ff00" stroke-width="1"/>
<rect x="269" y="213" width="11" height="27.5" fill="#fff" stroke="#00ff00" stroke-width="1"/>
<rect x="285" y="217.5" width="11" height="23.0" fill="#000" stroke="#00ff00" stroke-width="1"/>
<rect x="301" y="216" width="11" height="2" fill="#00ff00"/>
<rect x="317" y="212" width="11" height="5" fill="#000" stroke="#00ff00" stroke-width="1"/>
<rect x="333" y="212" width="11" height="2" fill="#00ff00"/>
<rect x="349" y="208" width="11" height="6" fill="#000" stroke="#00ff00" stroke-width="1"/>
<rect x="365" y="186" width="11" height="22.5" fill="#000" stroke="#00ff00" stroke-width="1"/>
<rect x="381" y="177" width="11" height="10.5" fill="#000" stroke="#00ff00" stroke-width="1"/>
<rect x="397" y="177" width="11" height="4" fill="#fff" stroke="#00ff00" stroke-width="1"/>
<rect x="413" y="175" width="11" height="6" fill="#000" stroke="#00ff00" stroke-width="1"/>
<rect x="429" y="176.5" width="11" height="4.5" fill="#fff" stroke="#00ff00" stroke-width="1"/>
<rect x="445" y="179" width="11" height="2" fill="#00ff00"/>
<rect x="461" y="180.5" width="11" height="10.5" fill="#fff" stroke="#00ff00" stroke-width="1"/>
<rect x="477" y="179.5" width="11" height="12.0" fill="#000" stroke="#00ff00" stroke-width="1"/>
<rect x="493" y="179.5" width="11" height="8.5" fill="#fff" stroke="#00ff00" stroke-width="1"/>
<rect x="509" y="187" width="11" height="25" fill="#fff" stroke="#00ff00" stroke-width="1"/>
<rect x="525" y="212" width="11" height="2" fill="#00ff00"/>
<rect x="541" y="214.5" width="11" height="6.0" fill="#fff" stroke="#00ff00" stroke-width="1"/>
<rect x="557" y="208.5" width="11" height="12.0" fill="#000" stroke="#00ff00" stroke-width="1"/>
<rect x="573" y="207.5" width="11" height="2" fill="#00ff00"/>
<rect x="589" y="208.5" width="11" height="2" fill="#00ff00"/>
<rect x="605" y="199" width="11" height="10.5" fill="#000" stroke="#00ff00" stroke-width="1"/>
<rect x="621" y="198" width="11" height="2" fill="#00ff00"/>
<rect x="637" y="179.5" width="11" height="20.0" fill="#000" stroke="#00ff00" stroke-width="1"/>
<rect x="653" y="179.5" width="11" height="10.5" fill="#fff" stroke="#00ff00" stroke-width="1"/>
<rect x="669" y="185.5" width="11" height="5.0" fill="#000" stroke="#00ff00" stroke-width="1"/>
<rect x="685" y="185" width="11" height="2" fill="#00ff00"/>
<rect x="701" y="179.5" width="11" height="6.0" fill="#000" stroke="#00ff00" stroke-width="1"/>
<rect x="717" y="179" width="11" height="2.5" fill="#fff" stroke="#00ff00" stroke-width="1"/>
<rect x="733" y="178" width="11" height="3.5" fill="#000" stroke="#00ff00" stroke-width="1"/>
<rect x="749" y="173" width="11" height="5.5" fill="#000" stroke="#00ff00" stroke-width="1"/>
<rect x="765" y="167" width="11" height="6.5" fill="#000" stroke="#00ff00" stroke-width="1"/>
<rect x="781" y="167.5" width="11" height="2.5" fill="#fff" stroke="#00ff00" stroke-width="1"/>
<rect x="797" y="169" width="11" height="2" fill="#00ff00"/>
<g shape-rendering="auto">
<polyline points="258.0,231.5 306.0,231.5 354.0,230.0 402.0,228.8 444.0,227.7 482.0,224.3 514.0,218.5 546.0,213.0 578.0,207.7 610.0,204.8 644.0,202.9 674.0,205.2 706.0,206.4 738.0,205.8 770.0,203.4 802.0,201.9 834.0,198.4 929.0,188.6" fill="none" stroke="#0a0aff" stroke-width="1.6" />
<polyline points="258.0,230.0 306.0,228.8 354.0,227.0 402.0,224.0 444.0,219.5 482.0,210.7 514.0,201.9 546.0,197.4 578.0,195.4 594.0,195.0 610.0,196.6 626.0,199.9 644.0,202.5 674.0,202.9 706.0,202.5 738.0,199.5 770.0,196.6 802.0,193.0 834.0,189.2 882.0,183.7" fill="none" stroke="#ff1414" stroke-width="1.5" />
<polyline points="258.0,229.0 290.0,229.0 330.0,226.0 354.0,224.3 386.0,221.4 410.0,215.5 434.0,206.8 454.0,200.0 466.0,197.0 482.0,192.7 498.0,190.0 514.0,189.0 546.0,188.8 562.0,189.8 578.0,193.0 594.0,198.4 610.0,201.9 626.0,202.9 642.0,203.8 674.0,202.9 706.0,199.0 738.0,193.5 770.0,188.8 802.0,185.3 834.0,180.0 849.0,178.0" fill="none" stroke="#14f014" stroke-width="1.3" />
</g>
<rect x="257" y="211" width="3" height="17" fill="#ff4500"/>
<rect x="273" y="200" width="3" height="52" fill="#00ffff"/>
<rect x="289" y="207" width="3" height="44" fill="#00ffff"/>
<rect x="305" y="214" width="3" height="12" fill="#ff4500"/>
<rect x="321" y="210" width="3" height="8.5" fill="#ff4500"/>
<rect x="337" y="206" width="3" height="14.5" fill="#ff4500"/>
<rect x="353" y="201" width="3" height="20" fill="#ff4500"/>
<rect x="369" y="180" width="3" height="31" fill="#ff4500"/>
<rect x="385" y="170" width="3" height="26" fill="#ff4500"/>
<rect x="401" y="171.5" width="3" height="10.5" fill="#ff4500"/>
<rect x="417" y="171" width="3" height="11" fill="#ff4500"/>
<rect x="433" y="176" width="3" height="6" fill="#ff4500"/>
<rect x="449" y="178" width="3" height="4" fill="#ff4500"/>
<rect x="465" y="180" width="3" height="16" fill="#00ffff"/>
<rect x="481" y="179.5" width="3" height="17.5" fill="#00ffff"/>
<rect x="497" y="178" width="3" height="14" fill="#ff4500"/>
<rect x="513" y="184" width="3" height="32.5" fill="#00ffff"/>
<rect x="529" y="204" width="3" height="18.5" fill="#00ffff"/>
<rect x="545" y="210" width="3" height="23.5" fill="#00ffff"/>
<rect x="561" y="205.5" width="3" height="16.0" fill="#00ffff"/>
<rect x="577" y="203" width="3" height="8.5" fill="#ff4500"/>
<rect x="593" y="205.5" width="3" height="7.0" fill="#ff4500"/>
<rect x="609" y="193" width="3" height="18.5" fill="#ff4500"/>
<rect x="625" y="193" width="3" height="16.5" fill="#ff4500"/>
<rect x="641" y="174" width="3" height="36.5" fill="#ff4500"/>
<rect x="657" y="179.5" width="3" height="14.5" fill="#ff4500"/>
<rect x="673" y="181" width="3" height="9.5" fill="#ff4500"/>
<rect x="689" y="179" width="3" height="9" fill="#ff4500"/>
<rect x="705" y="172" width="3" height="18.5" fill="#ff4500"/>
<rect x="721" y="164" width="3" height="22" fill="#ff4500"/>
<rect x="737" y="169" width="3" height="23.5" fill="#ff4500"/>
<rect x="753" y="165.5" width="3" height="31.5" fill="#ff4500"/>
<rect x="769" y="166" width="3" height="10.5" fill="#ff4500"/>
<rect x="785" y="166" width="3" height="9.5" fill="#ff4500"/>
<rect x="801" y="169" width="3" height="2" fill="#ff4500"/>
<polyline points="258.0,224.0 306.0,220.0 354.0,217.0 370.0,214.5 402.0,208.0 434.0,199.0 454.0,191.7 466.0,187.8 482.0,184.0 498.0,182.0 514.0,181.4" fill="none" stroke="#1eb4f5" stroke-width="2.3" />
<polyline points="514.0,181.4 530.0,181.0" fill="none" stroke="#fff" stroke-width="2.3" />
<polyline points="530.0,181.0 562.0,184.7 594.0,189.0 610.0,191.5 642.0,192.7" fill="none" stroke="#ffd21e" stroke-width="2.3" />
<polyline points="642.0,192.7 658.0,191.7" fill="none" stroke="#fff" stroke-width="2.3" />
<polyline points="658.0,191.7 706.0,191.0 722.0,189.8 754.0,186.8 786.0,183.0 802.0,180.4" fill="none" stroke="#1eb4f5" stroke-width="2.3" />
<rect x="319" y="227" width="6" height="4" fill="#00ffff"/>
</g>
<g shape-rendering="auto">
<circle cx="530" cy="196" r="3" fill="#ffd21e"/><circle cx="642" cy="218" r="3" fill="#00ffff"/>
<path d="M274 185.5l5.800 9.500-1.200.5-4.600-4-4.600 4-1.200-.5z" fill="#fff"/>
<path d="M386 156.5l5.800 9.500-1.200.5-4.600-4-4.600 4-1.200-.5z" fill="#fff"/>
<path d="M498 163.5l5.800 9.500-1.200.5-4.600-4-4.600 4-1.200-.5z" fill="#fff"/>
<path d="M642 158.5l5.800 9.500-1.200.5-4.600-4-4.600 4-1.200-.5z" fill="#fff"/>
<circle cx="274" cy="190.500" r="2.300" fill="#ffd21e"/>
<path d="M466 208.5l5.800-9.500-1.200-.5-4.600 4-4.600-4-1.200.5z" fill="#fff"/>
<path d="M546 245.5l5.800-9.500-1.200-.5-4.600 4-4.600-4-1.200.5z" fill="#fff"/>
<path d="M754 209.5l5.800-9.500-1.200-.5-4.600 4-4.600-4-1.200.5z" fill="#fff"/>
<path d="M831 158h10l-5 5z" fill="#9aa09a"/>
</g>
<path d="M259 164.500h3M259 170.500h3" stroke="#3cdc3c"/><path d="M259 167h3v2h-3z" fill="#3cdc3c"/>
<text x="262" y="170" font-size="10" fill="#d2ccd2" text-anchor="start" font-family="Liberation Sans,sans-serif"  textLength="200" lengthAdjust="spacingAndGlyphs">EURUSD,H4&#160;&#160;1.32236 1.32240 1.32236 1.32238</text>
<rect x="985" y="164" width="37" height="11" fill="#c2bcc2"/>
<text x="988.5" y="173" font-size="10" fill="#0a640a" text-anchor="start" font-family="Liberation Sans,sans-serif"  textLength="31.5" lengthAdjust="spacingAndGlyphs">1.32238</text>
<text x="988.5" y="190" font-size="10" fill="#d2ccd2" text-anchor="start" font-family="Liberation Sans,sans-serif"  textLength="31.5" lengthAdjust="spacingAndGlyphs">1.31915</text>
<text x="988.5" y="222" font-size="10" fill="#d2ccd2" text-anchor="start" font-family="Liberation Sans,sans-serif"  textLength="31.5" lengthAdjust="spacingAndGlyphs">1.31285</text>
<text x="988.5" y="254" font-size="10" fill="#d2ccd2" text-anchor="start" font-family="Liberation Sans,sans-serif"  textLength="31.5" lengthAdjust="spacingAndGlyphs">1.30670</text>
<path d="M258 282.500H983" stroke="#a01414" stroke-dasharray="4 3"/>
<rect x="257" y="277" width="3" height="5" fill="#0000f0"/>
<rect x="273" y="280" width="3" height="2" fill="#0000f0"/>
<rect x="289" y="281" width="3" height="1" fill="#0000f0"/>
<rect x="305" y="280" width="3" height="2" fill="#0000f0"/>
<rect x="321" y="276" width="3" height="6" fill="#0000f0"/>
<rect x="337" y="275" width="3" height="7" fill="#0000f0"/>
<rect x="353" y="273" width="3" height="9" fill="#0000f0"/>
<rect x="369" y="272" width="3" height="10" fill="#0000f0"/>
<rect x="385" y="271" width="3" height="11" fill="#0000f0"/>
<rect x="401" y="270" width="3" height="12" fill="#0000f0"/>
<rect x="417" y="258.5" width="3" height="23.5" fill="#0000f0"/>
<rect x="433" y="271" width="3" height="11" fill="#0000f0"/>
<rect x="449" y="271" width="3" height="11" fill="#0000f0"/>
<rect x="465" y="272" width="3" height="10" fill="#b4b4b4"/>
<rect x="481" y="272" width="3" height="10" fill="#b4b4b4"/>
<rect x="497" y="272" width="3" height="10" fill="#b4b4b4"/>
<rect x="513" y="272" width="3" height="10" fill="#b4b4b4"/>
<rect x="529" y="276" width="3" height="6" fill="#b4b4b4"/>
<rect x="545" y="281" width="3" height="1" fill="#b4b4b4"/>
<rect x="625" y="281" width="3" height="1" fill="#0000f0"/>
<rect x="641" y="273" width="3" height="9" fill="#0000f0"/>
<rect x="657" y="272" width="3" height="10" fill="#0000f0"/>
<rect x="673" y="270.7" width="3" height="11.300000000000011" fill="#0000f0"/>
<rect x="689" y="270" width="3" height="12" fill="#0000f0"/>
<rect x="705" y="269" width="3" height="13" fill="#0000f0"/>
<rect x="721" y="269" width="3" height="13" fill="#0000f0"/>
<rect x="737" y="268.6" width="3" height="13.399999999999977" fill="#0000f0"/>
<rect x="753" y="267" width="3" height="15" fill="#0000f0"/>
<rect x="769" y="265.5" width="3" height="16.5" fill="#0000f0"/>
<rect x="785" y="265.5" width="3" height="16.5" fill="#0000f0"/>
<rect x="801" y="266" width="3" height="16" fill="#0000f0"/>
<polyline points="258.0,279.0 300.0,278.3 340.0,277.3 370.0,275.4 390.0,272.4" fill="none" stroke="#1ef01e" stroke-width="2" />
<polyline points="443.0,259.0 482.0,259.0" fill="none" stroke="#1ef01e" stroke-width="1" />
<polyline points="525.0,266.0 547.0,270.0 574.0,277.0 594.0,280.8 630.0,281.0 642.0,280.0 677.0,275.6 715.0,272.0 752.0,269.0 803.0,267.0" fill="none" stroke="#1ef01e" stroke-width="2" />
<text x="262" y="269" font-size="10" fill="#d2ccd2" text-anchor="start" font-family="Liberation Sans,sans-serif"  textLength="256" lengthAdjust="spacingAndGlyphs">Golden MACD(5,34,5) 0.000000 0.003980 0.000000 0.003796</text>
<text x="985.8" y="266" font-size="10" fill="#d2ccd2" text-anchor="start" font-family="Liberation Sans,sans-serif"  textLength="36.5" lengthAdjust="spacingAndGlyphs">0.006145</text>
<text x="985" y="281" font-size="10" fill="#d2ccd2" text-anchor="start" font-family="Liberation Sans,sans-serif"  textLength="36" lengthAdjust="spacingAndGlyphs">-0.00029</text>
<clipPath id="cv"><rect x="258" y="287" width="725" height="35"/></clipPath><g clip-path="url(#cv)">
<text x="258" y="309" font-size="8.500" font-weight="bold" font-style="italic" text-anchor="middle" fill="#00ffff" font-family="Liberation Sans,sans-serif">k</text>
<rect x="254" y="316.500" width="9" height="6" fill="none" stroke="#1432ff" stroke-width="1.500" shape-rendering="auto"/><path d="M256 318l5 4M261 318l-5 4" stroke="#1432ff" stroke-width="1" shape-rendering="auto"/>
<text x="274" y="309" font-size="8.500" font-weight="bold" font-style="italic" text-anchor="middle" fill="#ffd21e" font-family="Liberation Sans,sans-serif">k</text>
<rect x="271" y="310" width="6" height="6" fill="#ffd21e"/>
<rect x="270" y="316.500" width="9" height="6" fill="none" stroke="#f01414" stroke-width="1.500" shape-rendering="auto"/><path d="M272 318l5 4M277 318l-5 4" stroke="#f01414" stroke-width="1" shape-rendering="auto"/>
<rect x="286" y="316.500" width="9" height="6" fill="none" stroke="#f01414" stroke-width="1.500" shape-rendering="auto"/><path d="M288 318l5 4M293 318l-5 4" stroke="#f01414" stroke-width="1" shape-rendering="auto"/>
<rect x="302" y="316.500" width="9" height="6" fill="none" stroke="#1432ff" stroke-width="1.500" shape-rendering="auto"/><path d="M304 318l5 4M309 318l-5 4" stroke="#1432ff" stroke-width="1" shape-rendering="auto"/>
<text x="322" y="309" font-size="8.500" font-weight="bold" font-style="italic" text-anchor="middle" fill="#00ffff" font-family="Liberation Sans,sans-serif">k</text>
<rect x="318" y="316.500" width="9" height="6" fill="none" stroke="#1432ff" stroke-width="1.500" shape-rendering="auto"/><path d="M320 318l5 4M325 318l-5 4" stroke="#1432ff" stroke-width="1" shape-rendering="auto"/>
<text x="338" y="309" font-size="8.500" font-weight="bold" font-style="italic" text-anchor="middle" fill="#00ffff" font-family="Liberation Sans,sans-serif">k</text>
<rect x="334" y="316.500" width="9" height="6" fill="none" stroke="#1432ff" stroke-width="1.500" shape-rendering="auto"/><path d="M336 318l5 4M341 318l-5 4" stroke="#1432ff" stroke-width="1" shape-rendering="auto"/>
<text x="354" y="309" font-size="8.500" font-weight="bold" font-style="italic" text-anchor="middle" fill="#00ffff" font-family="Liberation Sans,sans-serif">k</text>
<rect x="350" y="316.500" width="9" height="6" fill="none" stroke="#1432ff" stroke-width="1.500" shape-rendering="auto"/><path d="M352 318l5 4M357 318l-5 4" stroke="#1432ff" stroke-width="1" shape-rendering="auto"/>
<text x="370" y="309" font-size="8.500" font-weight="bold" font-style="italic" text-anchor="middle" fill="#00ffff" font-family="Liberation Sans,sans-serif">k</text>
<rect x="367" y="310" width="6" height="6" fill="#00ffff"/>
<rect x="366" y="316.500" width="9" height="6" fill="none" stroke="#1432ff" stroke-width="1.500" shape-rendering="auto"/><path d="M368 318l5 4M373 318l-5 4" stroke="#1432ff" stroke-width="1" shape-rendering="auto"/>
<text x="386" y="309" font-size="8.500" font-weight="bold" font-style="italic" text-anchor="middle" fill="#00ffff" font-family="Liberation Sans,sans-serif">k</text>
<rect x="383" y="310" width="6" height="6" fill="#00ffff"/>
<rect x="382" y="316.500" width="9" height="6" fill="none" stroke="#1432ff" stroke-width="1.500" shape-rendering="auto"/><path d="M384 318l5 4M389 318l-5 4" stroke="#1432ff" stroke-width="1" shape-rendering="auto"/>
<text x="402" y="309" font-size="8.500" font-weight="bold" font-style="italic" text-anchor="middle" fill="#00ffff" font-family="Liberation Sans,sans-serif">k</text>
<rect x="399" y="310" width="6" height="6" fill="#00ffff"/>
<rect x="398" y="316.500" width="9" height="6" fill="none" stroke="#1432ff" stroke-width="1.500" shape-rendering="auto"/><path d="M400 318l5 4M405 318l-5 4" stroke="#1432ff" stroke-width="1" shape-rendering="auto"/>
<text x="418" y="309" font-size="8.500" font-weight="bold" font-style="italic" text-anchor="middle" fill="#00ffff" font-family="Liberation Sans,sans-serif">k</text>
<rect x="415" y="310" width="6" height="6" fill="#00ffff"/>
<rect x="414" y="316.500" width="9" height="6" fill="none" stroke="#1432ff" stroke-width="1.500" shape-rendering="auto"/><path d="M416 318l5 4M421 318l-5 4" stroke="#1432ff" stroke-width="1" shape-rendering="auto"/>
<text x="434" y="309" font-size="8.500" font-weight="bold" font-style="italic" text-anchor="middle" fill="#00ffff" font-family="Liberation Sans,sans-serif">k</text>
<rect x="431" y="310" width="6" height="6" fill="#00ffff"/>
<rect x="430" y="316.500" width="9" height="6" fill="none" stroke="#1432ff" stroke-width="1.500" shape-rendering="auto"/><path d="M432 318l5 4M437 318l-5 4" stroke="#1432ff" stroke-width="1" shape-rendering="auto"/>
<text x="450" y="309" font-size="8.500" font-weight="bold" font-style="italic" text-anchor="middle" fill="#00ffff" font-family="Liberation Sans,sans-serif">k</text>
<rect x="447" y="310" width="6" height="6" fill="#00ffff"/>
<rect x="446" y="316.500" width="9" height="6" fill="none" stroke="#1432ff" stroke-width="1.500" shape-rendering="auto"/><path d="M448 318l5 4M453 318l-5 4" stroke="#1432ff" stroke-width="1" shape-rendering="auto"/>
<rect x="463" y="310" width="6" height="6" fill="#00ffff"/>
<rect x="462" y="316.500" width="9" height="6" fill="none" stroke="#1432ff" stroke-width="1.500" shape-rendering="auto"/><path d="M464 318l5 4M469 318l-5 4" stroke="#1432ff" stroke-width="1" shape-rendering="auto"/>
<rect x="479" y="310" width="6" height="6" fill="#00ffff"/>
<rect x="478" y="316.500" width="9" height="6" fill="none" stroke="#1432ff" stroke-width="1.500" shape-rendering="auto"/><path d="M480 318l5 4M485 318l-5 4" stroke="#1432ff" stroke-width="1" shape-rendering="auto"/>
<rect x="495" y="310" width="6" height="6" fill="#00ffff"/>
<rect x="494" y="316.500" width="9" height="6" fill="none" stroke="#1432ff" stroke-width="1.500" shape-rendering="auto"/><path d="M496 318l5 4M501 318l-5 4" stroke="#1432ff" stroke-width="1" shape-rendering="auto"/>
<text x="514" y="309" font-size="8.500" font-weight="bold" font-style="italic" text-anchor="middle" fill="#ffd21e" font-family="Liberation Sans,sans-serif">k</text>
<rect x="511" y="310" width="6" height="6" fill="#ffd21e"/>
<rect x="510" y="316.500" width="9" height="6" fill="none" stroke="#1432ff" stroke-width="1.500" shape-rendering="auto"/><path d="M512 318l5 4M517 318l-5 4" stroke="#1432ff" stroke-width="1" shape-rendering="auto"/>
<text x="530" y="309" font-size="8.500" font-weight="bold" font-style="italic" text-anchor="middle" fill="#ffd21e" font-family="Liberation Sans,sans-serif">k</text>
<rect x="527" y="310" width="6" height="6" fill="#ffd21e"/>
<rect x="526" y="316.500" width="9" height="6" fill="none" stroke="#1432ff" stroke-width="1.500" shape-rendering="auto"/><path d="M528 318l5 4M533 318l-5 4" stroke="#1432ff" stroke-width="1" shape-rendering="auto"/>
<text x="546" y="309" font-size="8.500" font-weight="bold" font-style="italic" text-anchor="middle" fill="#ffd21e" font-family="Liberation Sans,sans-serif">k</text>
<rect x="543" y="310" width="6" height="6" fill="#ffd21e"/>
<rect x="542" y="316.500" width="9" height="6" fill="none" stroke="#f01414" stroke-width="1.500" shape-rendering="auto"/><path d="M544 318l5 4M549 318l-5 4" stroke="#f01414" stroke-width="1" shape-rendering="auto"/>
<text x="562" y="309" font-size="8.500" font-weight="bold" font-style="italic" text-anchor="middle" fill="#ffd21e" font-family="Liberation Sans,sans-serif">k</text>
<rect x="559" y="310" width="6" height="6" fill="#ffd21e"/>
<rect x="558" y="316.500" width="9" height="6" fill="none" stroke="#1432ff" stroke-width="1.500" shape-rendering="auto"/><path d="M560 318l5 4M565 318l-5 4" stroke="#1432ff" stroke-width="1" shape-rendering="auto"/>
<text x="578" y="309" font-size="8.500" font-weight="bold" font-style="italic" text-anchor="middle" fill="#ffd21e" font-family="Liberation Sans,sans-serif">k</text>
<rect x="575" y="310" width="6" height="6" fill="#ffd21e"/>
<rect x="574" y="316.500" width="9" height="6" fill="none" stroke="#f01414" stroke-width="1.500" shape-rendering="auto"/><path d="M576 318l5 4M581 318l-5 4" stroke="#f01414" stroke-width="1" shape-rendering="auto"/>
<text x="594" y="309" font-size="8.500" font-weight="bold" font-style="italic" text-anchor="middle" fill="#ffd21e" font-family="Liberation Sans,sans-serif">k</text>
<rect x="591" y="310" width="6" height="6" fill="#ffd21e"/>
<rect x="590" y="316.500" width="9" height="6" fill="none" stroke="#f01414" stroke-width="1.500" shape-rendering="auto"/><path d="M592 318l5 4M597 318l-5 4" stroke="#f01414" stroke-width="1" shape-rendering="auto"/>
<rect x="606" y="316.500" width="9" height="6" fill="none" stroke="#f01414" stroke-width="1.500" shape-rendering="auto"/><path d="M608 318l5 4M613 318l-5 4" stroke="#f01414" stroke-width="1" shape-rendering="auto"/>
<rect x="622" y="316.500" width="9" height="6" fill="none" stroke="#f01414" stroke-width="1.500" shape-rendering="auto"/><path d="M624 318l5 4M629 318l-5 4" stroke="#f01414" stroke-width="1" shape-rendering="auto"/>
<text x="642" y="309" font-size="8.500" font-weight="bold" font-style="italic" text-anchor="middle" fill="#00ffff" font-family="Liberation Sans,sans-serif">k</text>
<rect x="638" y="316.500" width="9" height="6" fill="none" stroke="#f01414" stroke-width="1.500" shape-rendering="auto"/><path d="M640 318l5 4M645 318l-5 4" stroke="#f01414" stroke-width="1" shape-rendering="auto"/>
<text x="658" y="309" font-size="8.500" font-weight="bold" font-style="italic" text-anchor="middle" fill="#00ffff" font-family="Liberation Sans,sans-serif">k</text>
<rect x="654" y="316.500" width="9" height="6" fill="none" stroke="#f01414" stroke-width="1.500" shape-rendering="auto"/><path d="M656 318l5 4M661 318l-5 4" stroke="#f01414" stroke-width="1" shape-rendering="auto"/>
<text x="674" y="309" font-size="8.500" font-weight="bold" font-style="italic" text-anchor="middle" fill="#00ffff" font-family="Liberation Sans,sans-serif">k</text>
<rect x="670" y="316.500" width="9" height="6" fill="none" stroke="#f01414" stroke-width="1.500" shape-rendering="auto"/><path d="M672 318l5 4M677 318l-5 4" stroke="#f01414" stroke-width="1" shape-rendering="auto"/>
<text x="690" y="309" font-size="8.500" font-weight="bold" font-style="italic" text-anchor="middle" fill="#00ffff" font-family="Liberation Sans,sans-serif">k</text>
<rect x="687" y="310" width="6" height="6" fill="#00ffff"/>
<rect x="686" y="316.500" width="9" height="6" fill="none" stroke="#1432ff" stroke-width="1.500" shape-rendering="auto"/><path d="M688 318l5 4M693 318l-5 4" stroke="#1432ff" stroke-width="1" shape-rendering="auto"/>
<text x="706" y="309" font-size="8.500" font-weight="bold" font-style="italic" text-anchor="middle" fill="#00ffff" font-family="Liberation Sans,sans-serif">k</text>
<rect x="703" y="310" width="6" height="6" fill="#00ffff"/>
<rect x="702" y="316.500" width="9" height="6" fill="none" stroke="#1432ff" stroke-width="1.500" shape-rendering="auto"/><path d="M704 318l5 4M709 318l-5 4" stroke="#1432ff" stroke-width="1" shape-rendering="auto"/>
<text x="722" y="309" font-size="8.500" font-weight="bold" font-style="italic" text-anchor="middle" fill="#00ffff" font-family="Liberation Sans,sans-serif">k</text>
<rect x="719" y="310" width="6" height="6" fill="#00ffff"/>
<rect x="718" y="316.500" width="9" height="6" fill="none" stroke="#1432ff" stroke-width="1.500" shape-rendering="auto"/><path d="M720 318l5 4M725 318l-5 4" stroke="#1432ff" stroke-width="1" shape-rendering="auto"/>
<text x="738" y="309" font-size="8.500" font-weight="bold" font-style="italic" text-anchor="middle" fill="#00ffff" font-family="Liberation Sans,sans-serif">k</text>
<rect x="735" y="310" width="6" height="6" fill="#00ffff"/>
<rect x="734" y="316.500" width="9" height="6" fill="none" stroke="#1432ff" stroke-width="1.500" shape-rendering="auto"/><path d="M736 318l5 4M741 318l-5 4" stroke="#1432ff" stroke-width="1" shape-rendering="auto"/>
<text x="754" y="309" font-size="8.500" font-weight="bold" font-style="italic" text-anchor="middle" fill="#00ffff" font-family="Liberation Sans,sans-serif">k</text>
<rect x="751" y="310" width="6" height="6" fill="#00ffff"/>
<rect x="750" y="316.500" width="9" height="6" fill="none" stroke="#1432ff" stroke-width="1.500" shape-rendering="auto"/><path d="M752 318l5 4M757 318l-5 4" stroke="#1432ff" stroke-width="1" shape-rendering="auto"/>
<text x="770" y="309" font-size="8.500" font-weight="bold" font-style="italic" text-anchor="middle" fill="#00ffff" font-family="Liberation Sans,sans-serif">k</text>
<rect x="767" y="310" width="6" height="6" fill="#00ffff"/>
<rect x="766" y="316.500" width="9" height="6" fill="none" stroke="#1432ff" stroke-width="1.500" shape-rendering="auto"/><path d="M768 318l5 4M773 318l-5 4" stroke="#1432ff" stroke-width="1" shape-rendering="auto"/>
<text x="786" y="309" font-size="8.500" font-weight="bold" font-style="italic" text-anchor="middle" fill="#00ffff" font-family="Liberation Sans,sans-serif">k</text>
<rect x="783" y="310" width="6" height="6" fill="#00ffff"/>
<rect x="782" y="316.500" width="9" height="6" fill="none" stroke="#1432ff" stroke-width="1.500" shape-rendering="auto"/><path d="M784 318l5 4M789 318l-5 4" stroke="#1432ff" stroke-width="1" shape-rendering="auto"/>
<text x="802" y="309" font-size="8.500" font-weight="bold" font-style="italic" text-anchor="middle" fill="#00ffff" font-family="Liberation Sans,sans-serif">k</text>
<rect x="799" y="310" width="6" height="6" fill="#00ffff"/>
<rect x="798" y="316.500" width="9" height="6" fill="none" stroke="#1432ff" stroke-width="1.500" shape-rendering="auto"/><path d="M800 318l5 4M805 318l-5 4" stroke="#1432ff" stroke-width="1" shape-rendering="auto"/>
</g>
<path d="M527.500 288.500h5v5.500h3l-5.500 6-5.500-6h3z" fill="none" stroke="#ffd21e" stroke-width="1.200" shape-rendering="auto"/>
<path d="M640 299.500h5v-5.500h3l-5.500-6-5.500 6h3z" fill="none" stroke="#00ffff" stroke-width="1.200" shape-rendering="auto"/>
<text x="262" y="300" font-size="10" fill="#d2ccd2" text-anchor="start" font-family="Liberation Sans,sans-serif"  textLength="155" lengthAdjust="spacingAndGlyphs">Golden Varitey 0.0500 0.4700 0.2200</text>
<text x="986" y="297" font-size="10" fill="#d2ccd2" text-anchor="start" font-family="Liberation Sans,sans-serif" >1</text>
<text x="986" y="319" font-size="10" fill="#d2ccd2" text-anchor="start" font-family="Liberation Sans,sans-serif" >0</text>
<rect x="257" y="334" width="3" height="3" fill="#96f01e"/>
<rect x="321" y="335" width="3" height="2" fill="#96f01e"/>
<rect x="337" y="332.3" width="3" height="4.699999999999989" fill="#96f01e"/>
<rect x="353" y="331.5" width="3" height="5.5" fill="#96f01e"/>
<rect x="369" y="328.8" width="3" height="8.199999999999989" fill="#96f01e"/>
<rect x="385" y="326.8" width="3" height="10.199999999999989" fill="#96f01e"/>
<rect x="401" y="326.8" width="3" height="10.199999999999989" fill="#96f01e"/>
<rect x="417" y="326.8" width="3" height="10.199999999999989" fill="#ff5a14"/>
<rect x="433" y="328" width="3" height="9" fill="#ff5a14"/>
<rect x="449" y="330.4" width="3" height="6.600000000000023" fill="#ff5a14"/>
<rect x="465" y="336" width="3" height="1" fill="#ff5a14"/>
<rect x="481" y="337" width="3" height="5" fill="#ff5a14"/>
<rect x="497" y="337" width="3" height="7.600000000000023" fill="#ff5a14"/>
<rect x="513" y="337" width="3" height="11" fill="#ff5a14"/>
<rect x="529" y="337" width="3" height="13.600000000000023" fill="#ff5a14"/>
<rect x="545" y="337" width="3" height="14.600000000000023" fill="#ff5a14"/>
<rect x="561" y="337" width="3" height="13.800000000000011" fill="#96f01e"/>
<rect x="577" y="337" width="3" height="11.800000000000011" fill="#96f01e"/>
<rect x="593" y="337" width="3" height="9" fill="#96f01e"/>
<rect x="609" y="337" width="3" height="3" fill="#96f01e"/>
<rect x="625" y="335.5" width="3" height="1.5" fill="#96f01e"/>
<rect x="641" y="332" width="3" height="5" fill="#96f01e"/>
<rect x="657" y="330.7" width="3" height="6.300000000000011" fill="#96f01e"/>
<rect x="673" y="331" width="3" height="6" fill="#96f01e"/>
<rect x="689" y="332" width="3" height="5" fill="#ff5a14"/>
<rect x="705" y="333" width="3" height="4" fill="#ff5a14"/>
<rect x="721" y="333" width="3" height="4" fill="#ff5a14"/>
<rect x="737" y="336" width="3" height="1" fill="#ff5a14"/>
<rect x="753" y="336.5" width="3" height="1.0" fill="#ff5a14"/>
<rect x="769" y="336.5" width="3" height="1.0" fill="#96f01e"/>
<rect x="785" y="336.5" width="3" height="1.0" fill="#96f01e"/>
<rect x="801" y="336.5" width="3" height="1.0" fill="#ff5a14"/>
<rect x="262" y="329" width="66" height="11" fill="#ff5014"/>
<text x="262" y="338" font-size="10" fill="#d2ccd2" text-anchor="start" font-family="Liberation Sans,sans-serif"  textLength="59" lengthAdjust="spacingAndGlyphs">AC 0.0000365</text>
<rect x="986" y="326" width="36" height="12" fill="#ff5014"/><rect x="986" y="331" width="18" height="10" fill="#ff5014"/><rect x="986" y="341" width="36" height="11" fill="#ff5014"/>
<text x="986" y="334" font-size="10" fill="#d2ccd2" text-anchor="start" font-family="Liberation Sans,sans-serif"  textLength="36.5" lengthAdjust="spacingAndGlyphs">0.002455</text>
<text x="986" y="340" font-size="10" fill="#d2ccd2" text-anchor="start" font-family="Liberation Sans,sans-serif"  textLength="17" lengthAdjust="spacingAndGlyphs">0.00</text>
<text x="986" y="350" font-size="10" fill="#d2ccd2" text-anchor="start" font-family="Liberation Sans,sans-serif"  textLength="36" lengthAdjust="spacingAndGlyphs">-0.00313</text>
<rect x="257" y="377" width="3" height="1" fill="#0afa8c"/>
<rect x="273" y="376" width="3" height="2" fill="#0afa8c"/>
<rect x="289" y="376" width="3" height="2" fill="#0afa8c"/>
<rect x="305" y="375" width="3" height="3" fill="#0afa8c"/>
<rect x="321" y="374" width="3" height="4" fill="#0afa8c"/>
<rect x="337" y="373.3" width="3" height="4.699999999999989" fill="#0afa8c"/>
<rect x="353" y="370.6" width="3" height="7.399999999999977" fill="#0afa8c"/>
<rect x="369" y="368" width="3" height="10" fill="#0afa8c"/>
<rect x="385" y="365" width="3" height="13" fill="#0afa8c"/>
<rect x="401" y="363" width="3" height="15" fill="#0afa8c"/>
<rect x="417" y="360" width="3" height="18" fill="#0afa8c"/>
<rect x="433" y="358.3" width="3" height="19.69999999999999" fill="#0afa8c"/>
<rect x="449" y="358.3" width="3" height="19.69999999999999" fill="#0afa8c"/>
<rect x="465" y="359" width="3" height="19" fill="#ff1414"/>
<rect x="481" y="361.6" width="3" height="16.399999999999977" fill="#ff1414"/>
<rect x="497" y="363" width="3" height="15" fill="#ff1414"/>
<rect x="513" y="366" width="3" height="12" fill="#ff1414"/>
<rect x="529" y="370" width="3" height="8" fill="#ff1414"/>
<rect x="545" y="373.4" width="3" height="4.600000000000023" fill="#ff1414"/>
<rect x="561" y="376.5" width="3" height="1.5" fill="#ff1414"/>
<rect x="577" y="377" width="3" height="1" fill="#ff1414"/>
<rect x="593" y="376.5" width="3" height="1.5" fill="#ff1414"/>
<rect x="609" y="377" width="3" height="1" fill="#0afa8c"/>
<rect x="625" y="377" width="3" height="1" fill="#0afa8c"/>
<rect x="641" y="375" width="3" height="3" fill="#0afa8c"/>
<rect x="657" y="374" width="3" height="4" fill="#0afa8c"/>
<rect x="673" y="372.4" width="3" height="5.600000000000023" fill="#0afa8c"/>
<rect x="689" y="371" width="3" height="7" fill="#0afa8c"/>
<rect x="705" y="370" width="3" height="8" fill="#0afa8c"/>
<rect x="721" y="368.6" width="3" height="9.399999999999977" fill="#0afa8c"/>
<rect x="737" y="370" width="3" height="8" fill="#ff1414"/>
<rect x="753" y="370" width="3" height="8" fill="#ff1414"/>
<rect x="769" y="368.6" width="3" height="9.399999999999977" fill="#0afa8c"/>
<rect x="785" y="368.6" width="3" height="9.399999999999977" fill="#0afa8c"/>
<rect x="801" y="368.6" width="3" height="9.399999999999977" fill="#ff1414"/>
<rect x="262" y="360" width="62" height="11" fill="#ff1414"/>
<text x="262" y="369" font-size="10" fill="#d2ccd2" text-anchor="start" font-family="Liberation Sans,sans-serif"  textLength="55" lengthAdjust="spacingAndGlyphs">AO 0.003739</text>
<rect x="986" y="357" width="36" height="11" fill="#ff1414"/><rect x="986" y="369" width="36" height="11" fill="#ff1414"/>
<text x="986" y="366" font-size="10" fill="#d2ccd2" text-anchor="start" font-family="Liberation Sans,sans-serif"  textLength="36.5" lengthAdjust="spacingAndGlyphs">0.009076</text>
<text x="986" y="378" font-size="10" fill="#d2ccd2" text-anchor="start" font-family="Liberation Sans,sans-serif"  textLength="36" lengthAdjust="spacingAndGlyphs">-0.00095</text>
<rect x="257" y="399.6" width="3" height="11.399999999999977" fill="#f06e50"/>
<rect x="273" y="386.7" width="3" height="24.30000000000001" fill="#f06e50"/>
<rect x="289" y="386" width="3" height="25" fill="#0afa8c"/>
<rect x="305" y="400.8" width="3" height="10.199999999999989" fill="#0afa8c"/>
<rect x="321" y="408" width="3" height="3" fill="#0afa8c"/>
<rect x="337" y="406" width="3" height="5" fill="#f06e50"/>
<rect x="353" y="400.8" width="3" height="10.199999999999989" fill="#f06e50"/>
<rect x="369" y="391" width="3" height="20" fill="#f06e50"/>
<rect x="385" y="391.8" width="3" height="19.19999999999999" fill="#0afa8c"/>
<rect x="401" y="406" width="3" height="5" fill="#0afa8c"/>
<rect x="417" y="410" width="3" height="1" fill="#0afa8c"/>
<rect x="433" y="410" width="3" height="1" fill="#0afa8c"/>
<rect x="449" y="410.5" width="3" height="0.5" fill="#0afa8c"/>
<rect x="465" y="409.4" width="3" height="1.6000000000000227" fill="#f06e50"/>
<rect x="481" y="409" width="3" height="2" fill="#f06e50"/>
<rect x="497" y="407.4" width="3" height="3.6000000000000227" fill="#f06e50"/>
<rect x="513" y="400.8" width="3" height="10.199999999999989" fill="#f06e50"/>
<rect x="529" y="395.7" width="3" height="15.300000000000011" fill="#f06e50"/>
<rect x="545" y="391.8" width="3" height="19.19999999999999" fill="#f06e50"/>
<rect x="561" y="404.3" width="3" height="6.699999999999989" fill="#0afa8c"/>
<rect x="577" y="408" width="3" height="3" fill="#0afa8c"/>
<rect x="593" y="406" width="3" height="5" fill="#f06e50"/>
<rect x="609" y="400.8" width="3" height="10.199999999999989" fill="#f06e50"/>
<rect x="625" y="395" width="3" height="16" fill="#f06e50"/>
<rect x="641" y="391.9" width="3" height="19.100000000000023" fill="#f06e50"/>
<rect x="657" y="406" width="3" height="5" fill="#0afa8c"/>
<rect x="673" y="408.7" width="3" height="2.3000000000000114" fill="#0afa8c"/>
<rect x="689" y="408.7" width="3" height="2.3000000000000114" fill="#0afa8c"/>
<rect x="705" y="402" width="3" height="9" fill="#f06e50"/>
<rect x="721" y="391.9" width="3" height="19.100000000000023" fill="#f06e50"/>
<rect x="737" y="391.9" width="3" height="19.100000000000023" fill="#f06e50"/>
<rect x="753" y="393" width="3" height="18" fill="#0afa8c"/>
<rect x="769" y="408.7" width="3" height="2.3000000000000114" fill="#0afa8c"/>
<rect x="785" y="408.7" width="3" height="2.3000000000000114" fill="#f06e50"/>
<rect x="801" y="410.5" width="3" height="0.5" fill="#0afa8c"/>
<rect x="261" y="388" width="56" height="11" fill="#0afa9a"/>
<text x="262" y="397" font-size="10" fill="#c8a8b4" text-anchor="start" font-family="Liberation Sans,sans-serif"  textLength="48" lengthAdjust="spacingAndGlyphs">Volumes 14</text>
<rect x="986" y="385" width="25" height="11" fill="#0afa9a"/><rect x="986" y="400" width="6" height="11" fill="#0afa9a"/>
<text x="986" y="394" font-size="10" fill="#c8a8b4" text-anchor="start" font-family="Liberation Sans,sans-serif"  textLength="24" lengthAdjust="spacingAndGlyphs">11396</text>
<text x="986" y="409" font-size="10" fill="#c8a8b4" text-anchor="start" font-family="Liberation Sans,sans-serif" >0</text>
<path d="M258 435.500H983" stroke="#0afa9a"/><path d="M258 420.500H983M258 435.500H983" stroke="#d8d0d8" stroke-dasharray="3 3"/>
<clipPath id="cs"><rect x="258" y="416" width="546" height="24"/></clipPath><g clip-path="url(#cs)">
<polyline points="258.0,420.0 438.0,420.0 448.0,423.0 471.5,427.0 495.0,429.7 518.0,433.6 534.0,434.8 553.6,435.0 573.0,431.0 596.6,425.8 616.0,423.0 635.6,421.0 672.5,423.0 710.0,423.7 747.5,426.4 766.0,423.7 785.0,421.0 796.0,419.0 803.0,418.0" fill="none" stroke="#ff28a0" stroke-width="1.2" />
<polyline points="258.0,421.0 446.0,421.0 456.0,423.0 479.5,427.0 503.0,429.7 526.0,433.6 542.0,434.8 561.6,435.0 581.0,431.0 604.6,425.8 624.0,423.0 643.6,421.0 680.5,423.0 718.0,423.7 755.5,426.4 774.0,423.7 793.0,421.0 804.0,419.0" fill="none" stroke="#a0e61e" stroke-width="1.2" />
<path d="M258 420.500H440" stroke="#a0e61e" stroke-dasharray="3 3"/>
</g>
<rect x="262" y="419" width="128" height="11" fill="#0afa9a"/>
<text x="262" y="428" font-size="10" fill="#c8a8b4" text-anchor="start" font-family="Liberation Sans,sans-serif"  textLength="121" lengthAdjust="spacingAndGlyphs">Stoch(5,3,3) 85.5454 80.0111</text>
<rect x="986" y="416" width="15" height="10" fill="#0afa9a"/><rect x="986" y="429" width="9" height="11" fill="#0afa9a"/>
<text x="986" y="425" font-size="10" fill="#c8a8b4" text-anchor="start" font-family="Liberation Sans,sans-serif"  textLength="14" lengthAdjust="spacingAndGlyphs">100</text>
<text x="986" y="438" font-size="10" fill="#c8a8b4" text-anchor="start" font-family="Liberation Sans,sans-serif"  textLength="8" lengthAdjust="spacingAndGlyphs">01</text>
<rect x="258" y="441" width="1" height="3" fill="#d2ccd2"/>
<text x="258" y="453" font-size="10" fill="#d2ccd2" text-anchor="start" font-family="Liberation Sans,sans-serif"  textLength="49" lengthAdjust="spacingAndGlyphs">19 Apr 2012</text>
<rect x="322" y="441" width="1" height="3" fill="#d2ccd2"/>
<text x="322" y="453" font-size="10" fill="#d2ccd2" text-anchor="start" font-family="Liberation Sans,sans-serif"  textLength="52" lengthAdjust="spacingAndGlyphs">19 Apr 16:00</text>
<rect x="386" y="441" width="1" height="3" fill="#d2ccd2"/>
<text x="386" y="453" font-size="10" fill="#d2ccd2" text-anchor="start" font-family="Liberation Sans,sans-serif"  textLength="52" lengthAdjust="spacingAndGlyphs">20 Apr 08:00</text>
<rect x="450" y="441" width="1" height="3" fill="#d2ccd2"/>
<text x="450" y="453" font-size="10" fill="#d2ccd2" text-anchor="start" font-family="Liberation Sans,sans-serif"  textLength="52" lengthAdjust="spacingAndGlyphs">21 Apr 12:00</text>
<rect x="514" y="441" width="1" height="3" fill="#d2ccd2"/>
<text x="514" y="453" font-size="10" fill="#d2ccd2" text-anchor="start" font-family="Liberation Sans,sans-serif"  textLength="52" lengthAdjust="spacingAndGlyphs">23 Apr 00:00</text>
<rect x="578" y="441" width="1" height="3" fill="#d2ccd2"/>
<text x="578" y="453" font-size="10" fill="#d2ccd2" text-anchor="start" font-family="Liberation Sans,sans-serif"  textLength="52" lengthAdjust="spacingAndGlyphs">23 Apr 16:00</text>
<rect x="642" y="441" width="1" height="3" fill="#d2ccd2"/>
<text x="642" y="453" font-size="10" fill="#d2ccd2" text-anchor="start" font-family="Liberation Sans,sans-serif"  textLength="52" lengthAdjust="spacingAndGlyphs">24 Apr 08:00</text>
<rect x="706" y="441" width="1" height="3" fill="#d2ccd2"/>
<text x="706" y="453" font-size="10" fill="#d2ccd2" text-anchor="start" font-family="Liberation Sans,sans-serif"  textLength="52" lengthAdjust="spacingAndGlyphs">25 Apr 00:00</text>
<rect x="770" y="441" width="1" height="3" fill="#d2ccd2"/>
<text x="770" y="453" font-size="10" fill="#d2ccd2" text-anchor="start" font-family="Liberation Sans,sans-serif"  textLength="52" lengthAdjust="spacingAndGlyphs">25 Apr 16:00</text>
</svg>
<!-- terminal -->
<svg width="0" height="0" style="position:absolute"><defs><radialGradient id="gr" cx=".35" cy=".3" r=".8"><stop offset="0" stop-color="#ff8a5a"/><stop offset=".5" stop-color="#e8401e"/><stop offset="1" stop-color="#b02a0a"/></radialGradient><radialGradient id="gb" cx=".35" cy=".3" r=".8"><stop offset="0" stop-color="#8ac8ff"/><stop offset=".5" stop-color="#2a8ae8"/><stop offset="1" stop-color="#0a5ab8"/></radialGradient></defs></svg>
<div class="a" style="left:0;top:455px;width:251px;height:1px;background:#fff"></div>
<div class="a" style="left:0;top:458px;width:254px;height:1px;background:#9a968e"></div>
<svg class="a" style="left:3px;top:465px" width="7" height="7" viewBox="0 0 7 7"><path d="M0.500 0.500l6 6M6.500 0.500l-6 6" stroke="#000" stroke-width="1.600"/></svg>
<div class="a" style="left:1px;top:477px;width:13px;height:237px;background:#7a9ae2"></div>
<div class="a cjk" style="left:2px;top:712px;width:26px;height:13px;line-height:13px;font-size:12px;color:#cfdbf6;transform-origin:0 0;transform:rotate(-90deg)">终端</div>
<div class="a" style="left:14px;top:463px;width:1007px;height:230px;background:#fff;border-left:1px solid #c0bcac;border-top:1px solid #9a9888"></div><div class="a" style="left:1021px;top:463px;width:1px;height:232px;background:#fff"></div>
<div class="a" style="left:15px;top:464px;width:1006px;height:20px;background:linear-gradient(#ece9d8 0,#ece9d8 17px,#dfdccb 18px,#d2cebd 19px,#c9c5b4 20px)"></div>
<div class="a" style="left:114px;top:467px;width:1px;height:13px;background:#bdb9a9"></div><div class="a" style="left:115px;top:467px;width:1px;height:13px;background:#fff"></div>
<div class="a" style="left:281px;top:467px;width:1px;height:13px;background:#bdb9a9"></div><div class="a" style="left:282px;top:467px;width:1px;height:13px;background:#fff"></div>
<div class="a" style="left:349px;top:467px;width:1px;height:13px;background:#bdb9a9"></div><div class="a" style="left:350px;top:467px;width:1px;height:13px;background:#fff"></div>
<div class="a" style="left:402px;top:467px;width:1px;height:13px;background:#bdb9a9"></div><div class="a" style="left:403px;top:467px;width:1px;height:13px;background:#fff"></div>
<div class="a" style="left:470px;top:467px;width:1px;height:13px;background:#bdb9a9"></div><div class="a" style="left:471px;top:467px;width:1px;height:13px;background:#fff"></div>
<div class="a" style="left:546px;top:467px;width:1px;height:13px;background:#bdb9a9"></div><div class="a" style="left:547px;top:467px;width:1px;height:13px;background:#fff"></div>
<div class="a" style="left:622px;top:467px;width:1px;height:13px;background:#bdb9a9"></div><div class="a" style="left:623px;top:467px;width:1px;height:13px;background:#fff"></div>
<div class="a" style="left:698px;top:467px;width:1px;height:13px;background:#bdb9a9"></div><div class="a" style="left:699px;top:467px;width:1px;height:13px;background:#fff"></div>
<div class="a" style="left:774px;top:467px;width:1px;height:13px;background:#bdb9a9"></div><div class="a" style="left:775px;top:467px;width:1px;height:13px;background:#fff"></div>
<div class="a" style="left:850px;top:467px;width:1px;height:13px;background:#bdb9a9"></div><div class="a" style="left:851px;top:467px;width:1px;height:13px;background:#fff"></div>
<div class="a" style="left:926px;top:467px;width:1px;height:13px;background:#bdb9a9"></div><div class="a" style="left:927px;top:467px;width:1px;height:13px;background:#fff"></div>
<div class="a" style="left:1018px;top:467px;width:1px;height:13px;background:#bdb9a9"></div><div class="a" style="left:1019px;top:467px;width:1px;height:13px;background:#fff"></div>
<div class="a cjk" style="left:28px;top:465px;line-height:16px;font-size:11px">定单</div>
<svg class="a" style="left:61px;top:470px" width="8" height="8" viewBox="0 0 8 8"><path d="M0.500 7.500L4 0.500" stroke="#aca899"/><path d="M4 0.500L7.500 7.500H0.500" stroke="#fff" fill="none"/></svg>
<div class="a cjk" style="left:216px;width:60px;text-align:right;top:465px;line-height:16px;font-size:11px">时间</div>
<div class="a cjk" style="left:284px;width:60px;text-align:right;top:465px;line-height:16px;font-size:11px">类型</div>
<div class="a cjk" style="left:337px;width:60px;text-align:right;top:465px;line-height:16px;font-size:11px">手数</div>
<div class="a cjk" style="left:405px;width:60px;text-align:right;top:465px;line-height:16px;font-size:11px">商品</div>
<div class="a cjk" style="left:481px;width:60px;text-align:right;top:465px;line-height:16px;font-size:11px">价位</div>
<div class="a cjk" style="left:557px;width:60px;text-align:right;top:465px;line-height:16px;font-size:11px">止损</div>
<div class="a cjk" style="left:633px;width:60px;text-align:right;top:465px;line-height:16px;font-size:11px">获利</div>
<div class="a cjk" style="left:709px;width:60px;text-align:right;top:465px;line-height:16px;font-size:11px">价位</div>
<div class="a cjk" style="left:785px;width:60px;text-align:right;top:465px;line-height:16px;font-size:11px">佣金</div>
<div class="a cjk" style="left:861px;width:60px;text-align:right;top:465px;line-height:16px;font-size:11px">利息</div>
<div class="a cjk" style="left:953px;width:60px;text-align:right;top:465px;line-height:16px;font-size:11px">获利</div>
<div class="a" style="left:15px;top:485px;width:1003px;height:20px;background:#fff;border-bottom:1px solid #cacaca"></div>
<div class="a" style="left:114px;top:484px;width:1px;height:21px;background:#c8c8c8"></div>
<div class="a" style="left:281px;top:484px;width:1px;height:21px;background:#c8c8c8"></div>
<div class="a" style="left:349px;top:484px;width:1px;height:21px;background:#c8c8c8"></div>
<div class="a" style="left:402px;top:484px;width:1px;height:21px;background:#c8c8c8"></div>
<div class="a" style="left:470px;top:484px;width:1px;height:21px;background:#c8c8c8"></div>
<div class="a" style="left:546px;top:484px;width:1px;height:21px;background:#c8c8c8"></div>
<div class="a" style="left:622px;top:484px;width:1px;height:21px;background:#c8c8c8"></div>
<div class="a" style="left:698px;top:484px;width:1px;height:21px;background:#c8c8c8"></div>
<div class="a" style="left:774px;top:484px;width:1px;height:21px;background:#c8c8c8"></div>
<div class="a" style="left:850px;top:484px;width:1px;height:21px;background:#c8c8c8"></div>
<div class="a" style="left:926px;top:484px;width:1px;height:21px;background:#c8c8c8"></div>
<div class="a" style="left:1018px;top:484px;width:1px;height:21px;background:#c8c8c8"></div>
<svg class="a" style="left:18px;top:487px" width="15" height="16" viewBox="0 0 15 16"><path d="M1.500 1q0-.5.500-.5h6.500l3 3v9.500q0 .5-.500.5h-9q-.500 0-.500-.5z" fill="#fafafa" stroke="#5a5a5a"/><path d="M8.500 0.500v3h3" fill="none" stroke="#5a5a5a"/><circle cx="10.500" cy="11.500" r="3.600" fill="url(#gr)" stroke="#00000044" stroke-width=".5"/></svg>
<div class="a mono" style="left:41px;top:487px;line-height:14px">11859381</div>
<div class="a mono" style="left:167px;width:110px;text-align:right;top:487px;line-height:14px">2012.04.25 22:57</div>
<div class="a mono" style="left:235px;width:110px;text-align:right;top:487px;line-height:14px">sell</div>
<div class="a mono" style="left:288px;width:110px;text-align:right;top:487px;line-height:14px">0.01</div>
<div class="a mono" style="left:356px;width:110px;text-align:right;top:487px;line-height:14px">eurusd</div>
<div class="a mono" style="left:432px;width:110px;text-align:right;top:487px;line-height:14px">1.32287</div>
<div class="a mono" style="left:508px;width:110px;text-align:right;top:487px;line-height:14px">0.00000</div>
<div class="a mono" style="left:584px;width:110px;text-align:right;top:487px;line-height:14px">0.00000</div>
<div class="a mono" style="left:660px;width:110px;text-align:right;top:487px;line-height:14px">1.32249</div>
<div class="a mono" style="left:736px;width:110px;text-align:right;top:487px;line-height:14px">0.00</div>
<div class="a mono" style="left:812px;width:110px;text-align:right;top:487px;line-height:14px">0.00</div>
<div class="a mono" style="left:904px;width:110px;text-align:right;top:487px;line-height:14px">0.38</div>
<div class="a" style="left:15px;top:505px;width:1003px;height:20px;background:#ececec;border-bottom:1px solid #cacaca"></div>
<div class="a" style="left:114px;top:504px;width:1px;height:21px;background:#c8c8c8"></div>
<div class="a" style="left:281px;top:504px;width:1px;height:21px;background:#c8c8c8"></div>
<div class="a" style="left:349px;top:504px;width:1px;height:21px;background:#c8c8c8"></div>
<div class="a" style="left:402px;top:504px;width:1px;height:21px;background:#c8c8c8"></div>
<div class="a" style="left:470px;top:504px;width:1px;height:21px;background:#c8c8c8"></div>
<div class="a" style="left:546px;top:504px;width:1px;height:21px;background:#c8c8c8"></div>
<div class="a" style="left:622px;top:504px;width:1px;height:21px;background:#c8c8c8"></div>
<div class="a" style="left:698px;top:504px;width:1px;height:21px;background:#c8c8c8"></div>
<div class="a" style="left:774px;top:504px;width:1px;height:21px;background:#c8c8c8"></div>
<div class="a" style="left:850px;top:504px;width:1px;height:21px;background:#c8c8c8"></div>
<div class="a" style="left:926px;top:504px;width:1px;height:21px;background:#c8c8c8"></div>
<div class="a" style="left:1018px;top:504px;width:1px;height:21px;background:#c8c8c8"></div>
<svg class="a" style="left:18px;top:507px" width="15" height="16" viewBox="0 0 15 16"><path d="M1.500 1q0-.5.500-.5h6.500l3 3v9.500q0 .5-.500.5h-9q-.500 0-.500-.5z" fill="#fafafa" stroke="#5a5a5a"/><path d="M8.500 0.500v3h3" fill="none" stroke="#5a5a5a"/><circle cx="10.500" cy="11.500" r="3.600" fill="url(#gr)" stroke="#00000044" stroke-width=".5"/></svg>
<div class="a mono" style="left:41px;top:507px;line-height:14px">11859412</div>
<div class="a mono" style="left:167px;width:110px;text-align:right;top:507px;line-height:14px">2012.04.25 22:59</div>
<div class="a mono" style="left:235px;width:110px;text-align:right;top:507px;line-height:14px">sell</div>
<div class="a mono" style="left:288px;width:110px;text-align:right;top:507px;line-height:14px">0.01</div>
<div class="a mono" style="left:356px;width:110px;text-align:right;top:507px;line-height:14px">eurusd</div>
<div class="a mono" style="left:432px;width:110px;text-align:right;top:507px;line-height:14px">1.32298</div>
<div class="a mono" style="left:508px;width:110px;text-align:right;top:507px;line-height:14px">0.00000</div>
<div class="a mono" style="left:584px;width:110px;text-align:right;top:507px;line-height:14px">0.00000</div>
<div class="a mono" style="left:660px;width:110px;text-align:right;top:507px;line-height:14px">1.32249</div>
<div class="a mono" style="left:736px;width:110px;text-align:right;top:507px;line-height:14px">0.00</div>
<div class="a mono" style="left:812px;width:110px;text-align:right;top:507px;line-height:14px">0.00</div>
<div class="a mono" style="left:904px;width:110px;text-align:right;top:507px;line-height:14px">0.49</div>
<div class="a" style="left:15px;top:525px;width:1003px;height:20px;background:#fff;border-bottom:1px solid #cacaca"></div>
<div class="a" style="left:114px;top:524px;width:1px;height:21px;background:#c8c8c8"></div>
<div class="a" style="left:281px;top:524px;width:1px;height:21px;background:#c8c8c8"></div>
<div class="a" style="left:349px;top:524px;width:1px;height:21px;background:#c8c8c8"></div>
<div class="a" style="left:402px;top:524px;width:1px;height:21px;background:#c8c8c8"></div>
<div class="a" style="left:470px;top:524px;width:1px;height:21px;background:#c8c8c8"></div>
<div class="a" style="left:546px;top:524px;width:1px;height:21px;background:#c8c8c8"></div>
<div class="a" style="left:622px;top:524px;width:1px;height:21px;background:#c8c8c8"></div>
<div class="a" style="left:698px;top:524px;width:1px;height:21px;background:#c8c8c8"></div>
<div class="a" style="left:774px;top:524px;width:1px;height:21px;background:#c8c8c8"></div>
<div class="a" style="left:850px;top:524px;width:1px;height:21px;background:#c8c8c8"></div>
<div class="a" style="left:926px;top:524px;width:1px;height:21px;background:#c8c8c8"></div>
<div class="a" style="left:1018px;top:524px;width:1px;height:21px;background:#c8c8c8"></div>
<svg class="a" style="left:18px;top:527px" width="15" height="16" viewBox="0 0 15 16"><path d="M1.500 1q0-.5.500-.5h6.500l3 3v9.500q0 .5-.500.5h-9q-.500 0-.500-.5z" fill="#fafafa" stroke="#5a5a5a"/><path d="M8.500 0.500v3h3" fill="none" stroke="#5a5a5a"/><circle cx="10.500" cy="11.500" r="3.600" fill="url(#gr)" stroke="#00000044" stroke-width=".5"/></svg>
<div class="a mono" style="left:41px;top:527px;line-height:14px">11859510</div>
<div class="a mono" style="left:167px;width:110px;text-align:right;top:527px;line-height:14px">2012.04.25 23:04</div>
<div class="a mono" style="left:235px;width:110px;text-align:right;top:527px;line-height:14px">sell</div>
<div class="a mono" style="left:288px;width:110px;text-align:right;top:527px;line-height:14px">0.01</div>
<div class="a mono" style="left:356px;width:110px;text-align:right;top:527px;line-height:14px">eurusd</div>
<div class="a mono" style="left:432px;width:110px;text-align:right;top:527px;line-height:14px">1.32296</div>
<div class="a mono" style="left:508px;width:110px;text-align:right;top:527px;line-height:14px">0.00000</div>
<div class="a mono" style="left:584px;width:110px;text-align:right;top:527px;line-height:14px">0.00000</div>
<div class="a mono" style="left:660px;width:110px;text-align:right;top:527px;line-height:14px">1.32249</div>
<div class="a mono" style="left:736px;width:110px;text-align:right;top:527px;line-height:14px">0.00</div>
<div class="a mono" style="left:812px;width:110px;text-align:right;top:527px;line-height:14px">0.00</div>
<div class="a mono" style="left:904px;width:110px;text-align:right;top:527px;line-height:14px">0.47</div>
<div class="a" style="left:15px;top:545px;width:1003px;height:20px;background:#ececec;border-bottom:1px solid #cacaca"></div>
<div class="a" style="left:114px;top:544px;width:1px;height:21px;background:#c8c8c8"></div>
<div class="a" style="left:281px;top:544px;width:1px;height:21px;background:#c8c8c8"></div>
<div class="a" style="left:349px;top:544px;width:1px;height:21px;background:#c8c8c8"></div>
<div class="a" style="left:402px;top:544px;width:1px;height:21px;background:#c8c8c8"></div>
<div class="a" style="left:470px;top:544px;width:1px;height:21px;background:#c8c8c8"></div>
<div class="a" style="left:546px;top:544px;width:1px;height:21px;background:#c8c8c8"></div>
<div class="a" style="left:622px;top:544px;width:1px;height:21px;background:#c8c8c8"></div>
<div class="a" style="left:698px;top:544px;width:1px;height:21px;background:#c8c8c8"></div>
<div class="a" style="left:774px;top:544px;width:1px;height:21px;background:#c8c8c8"></div>
<div class="a" style="left:850px;top:544px;width:1px;height:21px;background:#c8c8c8"></div>
<div class="a" style="left:926px;top:544px;width:1px;height:21px;background:#c8c8c8"></div>
<div class="a" style="left:1018px;top:544px;width:1px;height:21px;background:#c8c8c8"></div>
<svg class="a" style="left:18px;top:547px" width="15" height="16" viewBox="0 0 15 16"><path d="M1.500 1q0-.5.500-.5h6.500l3 3v9.500q0 .5-.500.5h-9q-.500 0-.500-.5z" fill="#fafafa" stroke="#5a5a5a"/><path d="M8.500 0.500v3h3" fill="none" stroke="#5a5a5a"/><circle cx="10.500" cy="11.500" r="3.600" fill="url(#gr)" stroke="#00000044" stroke-width=".5"/></svg>
<div class="a mono" style="left:41px;top:547px;line-height:14px">11859546</div>
<div class="a mono" style="left:167px;width:110px;text-align:right;top:547px;line-height:14px">2012.04.25 23:08</div>
<div class="a mono" style="left:235px;width:110px;text-align:right;top:547px;line-height:14px">sell</div>
<div class="a mono" style="left:288px;width:110px;text-align:right;top:547px;line-height:14px">0.02</div>
<div class="a mono" style="left:356px;width:110px;text-align:right;top:547px;line-height:14px">eurusd</div>
<div class="a mono" style="left:432px;width:110px;text-align:right;top:547px;line-height:14px">1.32291</div>
<div class="a mono" style="left:508px;width:110px;text-align:right;top:547px;line-height:14px">0.00000</div>
<div class="a mono" style="left:584px;width:110px;text-align:right;top:547px;line-height:14px">0.00000</div>
<div class="a mono" style="left:660px;width:110px;text-align:right;top:547px;line-height:14px">1.32249</div>
<div class="a mono" style="left:736px;width:110px;text-align:right;top:547px;line-height:14px">0.00</div>
<div class="a mono" style="left:812px;width:110px;text-align:right;top:547px;line-height:14px">0.00</div>
<div class="a mono" style="left:904px;width:110px;text-align:right;top:547px;line-height:14px">0.84</div>
<div class="a" style="left:15px;top:565px;width:1003px;height:20px;background:#fff;border-bottom:1px solid #cacaca"></div>
<div class="a" style="left:114px;top:564px;width:1px;height:21px;background:#c8c8c8"></div>
<div class="a" style="left:281px;top:564px;width:1px;height:21px;background:#c8c8c8"></div>
<div class="a" style="left:349px;top:564px;width:1px;height:21px;background:#c8c8c8"></div>
<div class="a" style="left:402px;top:564px;width:1px;height:21px;background:#c8c8c8"></div>
<div class="a" style="left:470px;top:564px;width:1px;height:21px;background:#c8c8c8"></div>
<div class="a" style="left:546px;top:564px;width:1px;height:21px;background:#c8c8c8"></div>
<div class="a" style="left:622px;top:564px;width:1px;height:21px;background:#c8c8c8"></div>
<div class="a" style="left:698px;top:564px;width:1px;height:21px;background:#c8c8c8"></div>
<div class="a" style="left:774px;top:564px;width:1px;height:21px;background:#c8c8c8"></div>
<div class="a" style="left:850px;top:564px;width:1px;height:21px;background:#c8c8c8"></div>
<div class="a" style="left:926px;top:564px;width:1px;height:21px;background:#c8c8c8"></div>
<div class="a" style="left:1018px;top:564px;width:1px;height:21px;background:#c8c8c8"></div>
<svg class="a" style="left:18px;top:567px" width="15" height="16" viewBox="0 0 15 16"><path d="M1.500 1q0-.5.500-.5h6.500l3 3v9.500q0 .5-.500.5h-9q-.500 0-.500-.5z" fill="#fafafa" stroke="#5a5a5a"/><path d="M8.500 0.500v3h3" fill="none" stroke="#5a5a5a"/><circle cx="10.500" cy="11.500" r="3.600" fill="url(#gr)" stroke="#00000044" stroke-width=".5"/></svg>
<div class="a mono" style="left:41px;top:567px;line-height:14px">11859750</div>
<div class="a mono" style="left:167px;width:110px;text-align:right;top:567px;line-height:14px">2012.04.25 23:42</div>
<div class="a mono" style="left:235px;width:110px;text-align:right;top:567px;line-height:14px">sell</div>
<div class="a mono" style="left:288px;width:110px;text-align:right;top:567px;line-height:14px">0.05</div>
<div class="a mono" style="left:356px;width:110px;text-align:right;top:567px;line-height:14px">eurusd</div>
<div class="a mono" style="left:432px;width:110px;text-align:right;top:567px;line-height:14px">1.32247</div>
<div class="a mono" style="left:508px;width:110px;text-align:right;top:567px;line-height:14px">0.00000</div>
<div class="a mono" style="left:584px;width:110px;text-align:right;top:567px;line-height:14px">0.00000</div>
<div class="a mono" style="left:660px;width:110px;text-align:right;top:567px;line-height:14px">1.32249</div>
<div class="a mono" style="left:736px;width:110px;text-align:right;top:567px;line-height:14px">0.00</div>
<div class="a mono" style="left:812px;width:110px;text-align:right;top:567px;line-height:14px">0.00</div>
<div class="a mono" style="left:904px;width:110px;text-align:right;top:567px;line-height:14px">-0.10</div>
<div class="a" style="left:15px;top:584px;width:1003px;height:21px;background:#c8c8c4"></div>
<svg class="a" style="left:19px;top:588px" width="12" height="12" viewBox="0 0 12 12"><rect x="0.500" y="0.500" width="11" height="11" fill="#fff" stroke="#555"/><path d="M6 2L10 6H7.500V10H4.500V6H2z" fill="#1eb428" stroke="#0a6a14" stroke-width=".6"/></svg>
<div class="a" style="left:42px;top:586px;line-height:15px;font-weight:bold;font-size:12px;white-space:nowrap;font-family:'Liberation Mono','Noto Sans CJK SC',monospace">余额:</div>
<div class="a mono" style="left:80px;top:587px;line-height:14px;font-weight:bold;letter-spacing:.3px">312.23</div>
<div class="a" style="left:136px;top:586px;line-height:15px;font-weight:bold;font-size:12px;white-space:nowrap;font-family:'Liberation Mono','Noto Sans CJK SC',monospace">净值:</div>
<div class="a mono" style="left:173px;top:587px;line-height:14px;font-weight:bold;letter-spacing:.3px">314.31</div>
<div class="a" style="left:231px;top:586px;line-height:15px;font-weight:bold;font-size:12px;white-space:nowrap;font-family:'Liberation Mono','Noto Sans CJK SC',monospace">已用保证金:</div>
<div class="a mono" style="left:304px;top:587px;line-height:14px;font-weight:bold;letter-spacing:.3px">264.54</div>
<div class="a" style="left:361px;top:586px;line-height:15px;font-weight:bold;font-size:12px;white-space:nowrap;font-family:'Liberation Mono','Noto Sans CJK SC',monospace">可用保证金:</div>
<div class="a mono" style="left:434px;top:587px;line-height:14px;font-weight:bold;letter-spacing:.3px">49.77</div>
<div class="a" style="left:482px;top:586px;line-height:15px;font-weight:bold;font-size:12px;white-space:nowrap;font-family:'Liberation Mono','Noto Sans CJK SC',monospace">保证金比例:</div>
<div class="a mono" style="left:557px;top:587px;line-height:14px;font-weight:bold;letter-spacing:.3px">118.81%</div>
<div class="a mono" style="left:955px;width:60px;text-align:right;top:587px;line-height:14px;font-weight:bold;letter-spacing:.3px">2.08</div>
<div class="a" style="left:15px;top:605px;width:1003px;height:20px;background:#fff;border-bottom:1px solid #cacaca"></div>
<div class="a" style="left:114px;top:604px;width:1px;height:21px;background:#c8c8c8"></div>
<div class="a" style="left:281px;top:604px;width:1px;height:21px;background:#c8c8c8"></div>
<div class="a" style="left:349px;top:604px;width:1px;height:21px;background:#c8c8c8"></div>
<div class="a" style="left:402px;top:604px;width:1px;height:21px;background:#c8c8c8"></div>
<div class="a" style="left:470px;top:604px;width:1px;height:21px;background:#c8c8c8"></div>
<div class="a" style="left:546px;top:604px;width:1px;height:21px;background:#c8c8c8"></div>
<div class="a" style="left:622px;top:604px;width:1px;height:21px;background:#c8c8c8"></div>
<div class="a" style="left:698px;top:604px;width:1px;height:21px;background:#c8c8c8"></div>
<div class="a" style="left:774px;top:604px;width:1px;height:21px;background:#c8c8c8"></div>
<div class="a" style="left:926px;top:604px;width:1px;height:21px;background:#c8c8c8"></div>
<div class="a" style="left:1018px;top:604px;width:1px;height:21px;background:#c8c8c8"></div>
<svg class="a" style="left:18px;top:607px" width="15" height="16" viewBox="0 0 15 16"><path d="M1.500 1q0-.5.500-.5h6.500l3 3v9.500q0 .5-.500.5h-9q-.500 0-.500-.5z" fill="#fafafa" stroke="#5a5a5a"/><path d="M8.500 0.500v3h3" fill="none" stroke="#5a5a5a"/><circle cx="10.500" cy="11.500" r="3.600" fill="url(#gb)" stroke="#00000044" stroke-width=".5"/></svg>
<div class="a mono" style="left:41px;top:607px;line-height:14px">11859796</div>
<div class="a mono" style="left:167px;width:110px;text-align:right;top:607px;line-height:14px">2012.04.25 23:53</div>
<div class="a mono" style="left:235px;width:110px;text-align:right;top:607px;line-height:14px">buy stop</div>
<div class="a mono" style="left:288px;width:110px;text-align:right;top:607px;line-height:14px">0.10</div>
<div class="a mono" style="left:356px;width:110px;text-align:right;top:607px;line-height:14px">eurusd</div>
<div class="a mono" style="left:432px;width:110px;text-align:right;top:607px;line-height:14px">1.32361</div>
<div class="a mono" style="left:508px;width:110px;text-align:right;top:607px;line-height:14px">0.00000</div>
<div class="a mono" style="left:584px;width:110px;text-align:right;top:607px;line-height:14px">0.00000</div>
<div class="a mono" style="left:660px;width:110px;text-align:right;top:607px;line-height:14px">1.32249</div>
<div class="a mono" style="left:736px;width:110px;text-align:right;top:607px;line-height:14px"></div>
<div class="a mono" style="left:812px;width:110px;text-align:right;top:607px;line-height:14px"></div>
<div class="a mono" style="left:904px;width:110px;text-align:right;top:607px;line-height:14px"></div>
<div class="a" style="left:15px;top:693px;width:1006px;height:1px;background:#000"></div>
<div class="a" style="left:17px;top:693px;width:46px;height:18px;background:#fff;border:1px solid #000;border-top:none;box-shadow:1px 1px 0 #888"></div>
<div class="a cjk" style="left:18px;top:696px;width:44px;text-align:center;line-height:15px;font-size:12px">交易</div>
<div class="a cjk" style="left:71px;top:696px;line-height:15px;font-size:12px;color:#6a6858">账户历史</div>
<div class="a" style="left:130px;top:699px;width:1px;height:11px;background:#7a7868"></div>
<div class="a cjk" style="left:139px;top:696px;line-height:15px;font-size:12px;color:#6a6858">警报</div>
<div class="a" style="left:174px;top:699px;width:1px;height:11px;background:#7a7868"></div>
<div class="a cjk" style="left:183px;top:696px;line-height:15px;font-size:12px;color:#6a6858">邮箱</div>
<div class="a" style="left:218px;top:699px;width:1px;height:11px;background:#7a7868"></div>
<div class="a cjk" style="left:228px;top:696px;line-height:15px;font-size:12px;color:#6a6858">智能交易</div>
<div class="a" style="left:286px;top:699px;width:1px;height:11px;background:#7a7868"></div>
<div class="a cjk" style="left:297px;top:696px;line-height:15px;font-size:12px;color:#6a6858">日志</div>
<div class="a" style="left:330px;top:699px;width:1px;height:11px;background:#7a7868"></div>
<!-- status -->
<div class="a" style="left:0;top:715px;width:1024px;height:1px;background:#c5c2b2"></div>
<div class="a" style="left:0;top:716px;width:1024px;height:1px;background:#fff"></div>
<div class="a" style="left:3px;top:722px;line-height:14px;font-size:11px;letter-spacing:-.4px;font-family:'Liberation Mono','Noto Sans CJK SC',monospace;white-space:nowrap">寻求帮助,请按F1键</div>
<div class="a mono" style="left:158px;top:722px;line-height:14px">Default</div>
<div class="a" style="left:152px;top:719px;width:1px;height:17px;background:#c5c2b2"></div><div class="a" style="left:153px;top:719px;width:1px;height:17px;background:#fff"></div>
<div class="a" style="left:316px;top:719px;width:1px;height:17px;background:#c5c2b2"></div><div class="a" style="left:317px;top:719px;width:1px;height:17px;background:#fff"></div>
<div class="a" style="left:432px;top:719px;width:1px;height:17px;background:#c5c2b2"></div><div class="a" style="left:433px;top:719px;width:1px;height:17px;background:#fff"></div>
<div class="a" style="left:518px;top:719px;width:1px;height:17px;background:#c5c2b2"></div><div class="a" style="left:519px;top:719px;width:1px;height:17px;background:#fff"></div>
<div class="a" style="left:604px;top:719px;width:1px;height:17px;background:#c5c2b2"></div><div class="a" style="left:605px;top:719px;width:1px;height:17px;background:#fff"></div>
<div class="a" style="left:690px;top:719px;width:1px;height:17px;background:#c5c2b2"></div><div class="a" style="left:691px;top:719px;width:1px;height:17px;background:#fff"></div>
<div class="a" style="left:776px;top:719px;width:1px;height:17px;background:#c5c2b2"></div><div class="a" style="left:777px;top:719px;width:1px;height:17px;background:#fff"></div>
<div class="a" style="left:862px;top:719px;width:1px;height:17px;background:#c5c2b2"></div><div class="a" style="left:863px;top:719px;width:1px;height:17px;background:#fff"></div>
<svg class="a" style="left:867px;top:723px" width="26" height="12" viewBox="0 0 26 12"><rect x="0" y="0" width="2" height="7.0" fill="#2a9a2a"/><rect x="0" y="7.0" width="2" height="4.0" fill="#c83232"/><rect x="3" y="0" width="2" height="6.5" fill="#2a9a2a"/><rect x="3" y="6.5" width="2" height="4.5" fill="#c83232"/><rect x="6" y="0" width="2" height="6.0" fill="#2a9a2a"/><rect x="6" y="6.0" width="2" height="5.0" fill="#c83232"/><rect x="9" y="0" width="2" height="5.5" fill="#2a9a2a"/><rect x="9" y="5.5" width="2" height="5.5" fill="#c83232"/><rect x="12" y="0" width="2" height="5.0" fill="#2a9a2a"/><rect x="12" y="5.0" width="2" height="6.0" fill="#c83232"/><rect x="15" y="0" width="2" height="4.5" fill="#2a9a2a"/><rect x="15" y="4.5" width="2" height="6.5" fill="#c83232"/><rect x="18" y="0" width="2" height="4.0" fill="#2a9a2a"/><rect x="18" y="4.0" width="2" height="7.0" fill="#c83232"/><rect x="21" y="0" width="2" height="3.5" fill="#2a9a2a"/><rect x="21" y="3.5" width="2" height="7.5" fill="#c83232"/><rect x="24" y="0" width="2" height="3.0" fill="#2a9a2a"/><rect x="24" y="3.0" width="2" height="8.0" fill="#c83232"/></svg>
<div class="a mono" style="left:917px;top:722px;line-height:14px">958/6 kb</div>
<svg class="a" style="left:1009px;top:723px" width="14" height="14" viewBox="0 0 14 14"><path d="M13 2L2 13M13 6L6 13M13 10L10 13" stroke="#b8b5a4" stroke-width="1.500"/><path d="M14 3L3 14M14 7L7 14M14 11L11 14" stroke="#fff" stroke-width="1"/></svg>
<!-- taskbar -->
<div class="a" style="left:0;top:738px;width:1024px;height:30px;background:linear-gradient(#3a80ee 0,#2a66e0 3px,#245edb 8px,#2258d6 22px,#1c48b8 30px)"></div>
<div class="a" style="left:0;top:738px;width:96px;height:30px;background:linear-gradient(#5aa85a 0,#3c963c 4px,#2f8a32 12px,#2a7e2c 24px,#1e6a22 30px);border-radius:0 10px 10px 0;box-shadow:1px 0 2px #123a9a inset,-8px 0 8px -4px #1e6a22 inset"></div>
<svg class="a" style="left:9px;top:744px" width="19" height="18" viewBox="0 0 19 18"><path d="M1 3q3-2 7 0l-1.500 5.500q-3.500-1.500-7 0z" fill="#f0502a"/><path d="M9.500 3.500q3 1.500 7.500-.5l-1.500 5.500q-4 2-7.500.5z" fill="#6ac83a"/><path d="M-.5 10q3.500-1.500 6.500 0l-1.500 5.500q-3-1.500-6.500 0z" fill="#3a8af0"/><path d="M7.500 10.500q3.500 1.500 7.500-.5l-1.500 5.500q-4 2-7.500.5z" fill="#f8d030"/></svg>
<div class="a" style="left:36px;top:741px;font-family:'Liberation Sans','Noto Sans CJK SC',sans-serif;font-style:italic;font-weight:normal;font-size:18px;line-height:24px;color:#fff;white-space:nowrap;text-shadow:1px 1px 1px #1a4a1a">开始</div>
<svg class="a" style="left:108px;top:744px" width="18" height="17" viewBox="0 0 18 17"><circle cx="9" cy="9" r="5" fill="none" stroke="#3a9cf0" stroke-width="3.200" stroke-dasharray="0 4.500 27"/><path d="M5 9h9.500" stroke="#3a9cf0" stroke-width="2.600"/><path d="M1.500 14.500q-2-4 4-8.500t10-3.500q1.500 1 .5 3" stroke="#7ac4f8" stroke-width="1.300" fill="none"/></svg>
<svg class="a" style="left:132px;top:743px" width="16" height="19" viewBox="0 0 16 19"><ellipse cx="8" cy="10" rx="6" ry="7.500" fill="#111"/><ellipse cx="8" cy="12" rx="3.500" ry="4.500" fill="#fff"/><ellipse cx="8" cy="5" rx="4" ry="4" fill="#111"/><path d="M2 9q6 3 12 0v2q-6 3-12 0z" fill="#e02a1a"/><ellipse cx="8" cy="7" rx="2.500" ry="1" fill="#f0a020"/><path d="M2 17h5v1.500h-5zM9 17h5v1.500h-5z" fill="#f0a020"/></svg>
<svg class="a" style="left:155px;top:744px" width="16" height="17" viewBox="0 0 16 17"><path d="M8 0.500l7 2.500v6q-1 5-7 7.500-6-2.500-7-7.500v-6z" fill="#3cb43c" stroke="#d8f0d8" stroke-width="1.200"/><path d="M5 6h6l-4 3h4l-5 4 1.500-3.500h-3z" fill="#fff"/></svg>
<div class="a" style="left:182px;top:742px;font-family:'Liberation Sans',sans-serif;font-size:11px;line-height:12px;color:#cfe0ff">»</div>
<div class="a" style="left:199px;top:742px;width:147px;height:23px;background:linear-gradient(#6aa0f6 0,#4a86ee 3px,#3f7ae8 24px,#3a70de 25px);border-radius:3px;box-shadow:0 0 0 1px #2a5cc8 inset,1px 1px 0 #6aa0f8 inset"></div><svg class="a" style="left:207px;top:745px" width="17" height="17" viewBox="0 0 18 18"><circle cx="9" cy="9" r="8.500" fill="#9cc43a"/><path d="M5 14 L6 4 L13 12 L12 3" fill="none" stroke="#e6f2ff" stroke-width="2.400"/></svg><div class="a mono" style="left:227px;top:746px;line-height:15px;color:#fff;font-size:11.500px;letter-spacing:-.9px">161674: OANDA ...</div>
<div class="a" style="left:349px;top:742px;width:149px;height:23px;background:linear-gradient(#6aa0f6 0,#4a86ee 3px,#3f7ae8 24px,#3a70de 25px);border-radius:3px;box-shadow:0 0 0 1px #2a5cc8 inset,1px 1px 0 #6aa0f8 inset"></div><svg class="a" style="left:360px;top:745px" width="12" height="17" viewBox="0 0 12 17"><path d="M2 3l3-2 3 3-3 3 4 3-3 5-3-3 2-3z" fill="#3a7ae0" stroke="#1a4ab0" stroke-width=".8"/></svg><div class="a mono" style="left:377px;top:746px;line-height:15px;color:#fff;font-size:11.500px;letter-spacing:-.9px">8081: MetaTrad...</div>
<div class="a" style="left:500px;top:742px;width:148px;height:23px;background:linear-gradient(#6aa0f6 0,#4a86ee 3px,#3f7ae8 24px,#3a70de 25px);border-radius:3px;box-shadow:0 0 0 1px #2a5cc8 inset,1px 1px 0 #6aa0f8 inset"></div><svg class="a" style="left:504px;top:745px" width="18" height="17" viewBox="0 0 18 17"><circle cx="9" cy="9" r="5" fill="none" stroke="#4aa8f4" stroke-width="3.200" stroke-dasharray="0 4.500 27"/><path d="M5 9h9.500" stroke="#4aa8f4" stroke-width="2.600"/><path d="M1.500 14.500q-2-4 4-8.500t10-3.500q1.500 1 .5 3" stroke="#8accf8" stroke-width="1.300" fill="none"/></svg><div class="a mono" style="left:528px;top:746px;line-height:15px;color:#f0c060;font-weight:bold;font-size:11.500px">3</div><div class="a mono" style="left:539px;top:746px;line-height:15px;color:#fff;font-size:11.500px;letter-spacing:-.9px">Internet Exp...</div><svg class="a" style="left:638px;top:751px" width="7" height="4" viewBox="0 0 7 4"><path d="M0 0h7L3.500 4z" fill="#fff"/></svg>
<div class="a" style="left:651px;top:742px;width:150px;height:23px;background:linear-gradient(#6aa0f6 0,#4a86ee 3px,#3f7ae8 24px,#3a70de 25px);border-radius:3px;box-shadow:0 0 0 1px #2a5cc8 inset,1px 1px 0 #6aa0f8 inset"></div><svg class="a" style="left:660px;top:745px" width="17" height="17" viewBox="0 0 17 17"><rect x="0.500" y="0.500" width="16" height="16" rx="3" fill="#e83c2a" stroke="#f8d8c8"/><ellipse cx="8.500" cy="7" rx="5" ry="3.500" fill="#f8e0b0"/><rect x="3" y="11" width="11" height="3" fill="#f8c060"/></svg><div class="a mono" style="left:679px;top:746px;line-height:15px;color:#f0c060;font-weight:bold;font-size:11.500px">2</div><div class="a mono" style="left:690px;top:746px;line-height:15px;color:#fff;font-size:11.500px;letter-spacing:-.9px">PowerDVD</div><svg class="a" style="left:791px;top:751px" width="7" height="4" viewBox="0 0 7 4"><path d="M0 0h7L3.500 4z" fill="#fff"/></svg>
<svg class="a" style="left:810px;top:748px" width="15" height="11" viewBox="0 0 15 11"><rect x="0.500" y="0.500" width="14" height="10" fill="#e8e8e8" stroke="#444"/><path d="M2 3h11M2 5h11M2 7h11" stroke="#444" stroke-dasharray="1 1"/><path d="M4 9h7" stroke="#444"/></svg>
<div class="a cjk" style="left:832px;top:745px;line-height:16px;font-size:12px;color:#a8c8f8">我的电脑</div>
<div class="a" style="left:889px;top:742px;font-family:'Liberation Sans',sans-serif;font-size:11px;line-height:12px;color:#cfe0ff">»</div>
<div class="a" style="left:911px;top:738px;width:113px;height:30px;background:linear-gradient(#2aa0f4 0,#1a8ae8 4px,#1684e4 20px,#0e6ed0 30px);border-left:1px solid #0e4ea8;box-shadow:1px 0 0 #3ab0f8 inset"></div>
<div class="a" style="left:903px;top:745px;width:17px;height:17px;border-radius:9px;background:radial-gradient(circle at 40% 35%,#6ab8ff,#2a78e8);border:1px solid #dceaff"></div>
<svg class="a" style="left:908px;top:749px" width="7" height="9" viewBox="0 0 7 9"><path d="M5.500 1L1.500 4.500 5.500 8" stroke="#fff" stroke-width="2" fill="none"/></svg>
<svg class="a" style="left:921px;top:745px" width="16" height="16" viewBox="0 0 16 16"><rect x="1" y="4" width="9" height="8" fill="#f0d030" stroke="#222"/><path d="M10 3l5-2-2 4 3 3-4 0-1 4-2-4" fill="#f8e85a" stroke="#222" stroke-width=".7"/></svg>
<svg class="a" style="left:937px;top:745px" width="17" height="16" viewBox="0 0 17 16"><rect x="1" y="3" width="9" height="7" fill="#cfe0f8" stroke="#333"/><rect x="3" y="11" width="5" height="2" fill="#888"/><path d="M12 4q2 3 0 6M14 2q3 5 0 10" stroke="#e8f0ff" fill="none"/></svg>
<div class="a" style="left:958px;top:746px;width:13px;height:13px;background:#8a7a1a;border:1px solid #222;background-image:repeating-linear-gradient(90deg,#c8b43a 0 1px,transparent 1px 2px)"></div>
<div class="a tah" style="left:981px;top:746px;line-height:15px;color:#fff;font-size:11px">12:08</div>
</div>
</body>
</html>
